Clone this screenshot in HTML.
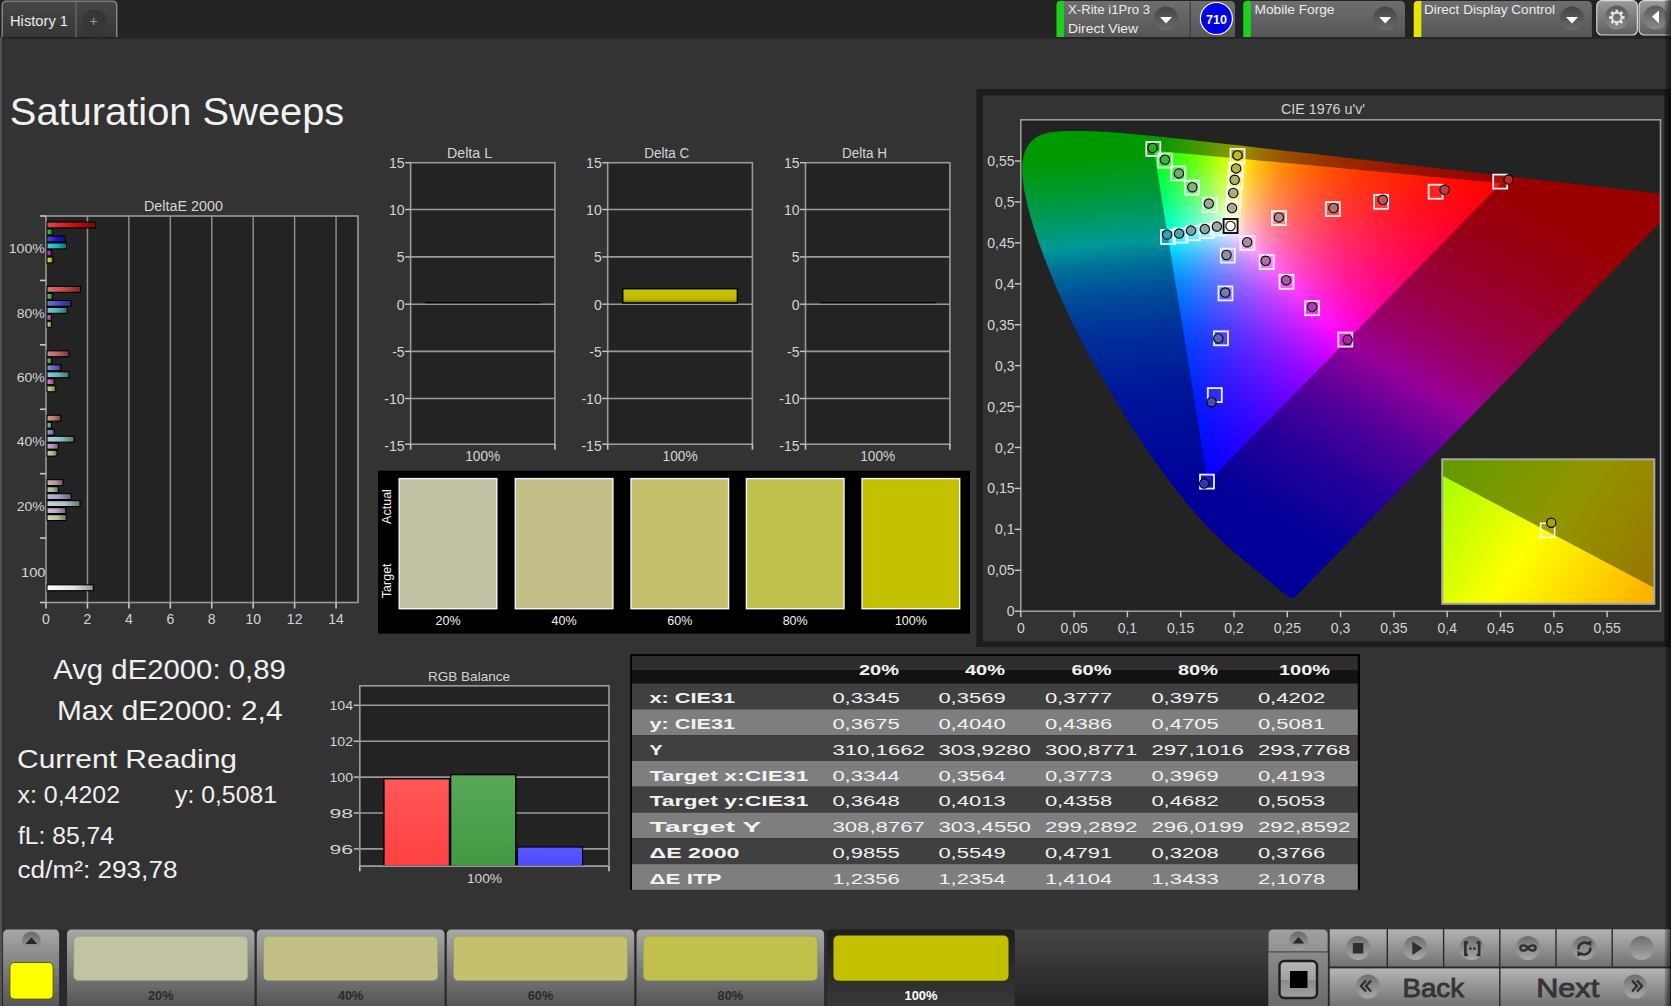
<!DOCTYPE html>
<html><head><meta charset="utf-8"><title>Saturation Sweeps</title>
<style>html,body{margin:0;padding:0;background:#333;overflow:hidden}svg{display:block}text{font-family:"Liberation Sans", sans-serif}</style>
</head><body><svg width="1671" height="1006" viewBox="0 0 1671 1006" font-family='"Liberation Sans", sans-serif'><defs><linearGradient id="v1" x1="0" y1="0" x2="0" y2="1"><stop offset="0" stop-color="#474747"/><stop offset="1" stop-color="#363636"/></linearGradient><linearGradient id="v2" x1="0" y1="0" x2="0" y2="1"><stop offset="0" stop-color="#6e6e6e"/><stop offset="1" stop-color="#565656"/></linearGradient><linearGradient id="v3" x1="0" y1="0" x2="0" y2="1"><stop offset="0" stop-color="#444"/><stop offset="1" stop-color="#6a6a6a"/></linearGradient><linearGradient id="v4" x1="0" y1="0" x2="0" y2="1"><stop offset="0" stop-color="#6e6e6e"/><stop offset="1" stop-color="#565656"/></linearGradient><linearGradient id="v5" x1="0" y1="0" x2="0" y2="1"><stop offset="0" stop-color="#444"/><stop offset="1" stop-color="#6a6a6a"/></linearGradient><linearGradient id="v6" x1="0" y1="0" x2="0" y2="1"><stop offset="0" stop-color="#6e6e6e"/><stop offset="1" stop-color="#565656"/></linearGradient><linearGradient id="v7" x1="0" y1="0" x2="0" y2="1"><stop offset="0" stop-color="#444"/><stop offset="1" stop-color="#6a6a6a"/></linearGradient><linearGradient id="v8" x1="0" y1="0" x2="0" y2="1"><stop offset="0" stop-color="#9a9a9a"/><stop offset="1" stop-color="#5e5e5e"/></linearGradient><linearGradient id="v9" x1="0" y1="0" x2="0" y2="1"><stop offset="0" stop-color="#9a9a9a"/><stop offset="1" stop-color="#5e5e5e"/></linearGradient><linearGradient id="v10" x1="0" y1="0" x2="0" y2="1"><stop offset="0" stop-color="#5a5a5a"/><stop offset="1" stop-color="#8a8a8a"/></linearGradient><linearGradient id="v11" x1="0" y1="0" x2="0" y2="1"><stop offset="0" stop-color="#5a5a5a"/><stop offset="1" stop-color="#8a8a8a"/></linearGradient><linearGradient id="h12" x1="0" y1="0" x2="1" y2="0"><stop offset="0" stop-color="#db4b4b"/><stop offset="0.5" stop-color="#d01010"/><stop offset="1" stop-color="#7c0909"/></linearGradient><linearGradient id="h13" x1="0" y1="0" x2="1" y2="0"><stop offset="0" stop-color="#57c357"/><stop offset="0.5" stop-color="#20b020"/><stop offset="1" stop-color="#136913"/></linearGradient><linearGradient id="h14" x1="0" y1="0" x2="1" y2="0"><stop offset="0" stop-color="#5151d5"/><stop offset="0.5" stop-color="#1818c8"/><stop offset="1" stop-color="#0e0e78"/></linearGradient><linearGradient id="h15" x1="0" y1="0" x2="1" y2="0"><stop offset="0" stop-color="#51c9c9"/><stop offset="0.5" stop-color="#18b8b8"/><stop offset="1" stop-color="#0e6e6e"/></linearGradient><linearGradient id="h16" x1="0" y1="0" x2="1" y2="0"><stop offset="0" stop-color="#c957c9"/><stop offset="0.5" stop-color="#b820b8"/><stop offset="1" stop-color="#6e136e"/></linearGradient><linearGradient id="h17" x1="0" y1="0" x2="1" y2="0"><stop offset="0" stop-color="#d5d551"/><stop offset="0.5" stop-color="#c8c818"/><stop offset="1" stop-color="#78780e"/></linearGradient><linearGradient id="h18" x1="0" y1="0" x2="1" y2="0"><stop offset="0" stop-color="#d57575"/><stop offset="0.5" stop-color="#c84848"/><stop offset="1" stop-color="#782b2b"/></linearGradient><linearGradient id="h19" x1="0" y1="0" x2="1" y2="0"><stop offset="0" stop-color="#6fbd6f"/><stop offset="0.5" stop-color="#40a840"/><stop offset="1" stop-color="#266426"/></linearGradient><linearGradient id="h20" x1="0" y1="0" x2="1" y2="0"><stop offset="0" stop-color="#7575d5"/><stop offset="0.5" stop-color="#4848c8"/><stop offset="1" stop-color="#2b2b78"/></linearGradient><linearGradient id="h21" x1="0" y1="0" x2="1" y2="0"><stop offset="0" stop-color="#75c9c9"/><stop offset="0.5" stop-color="#48b8b8"/><stop offset="1" stop-color="#2b6e6e"/></linearGradient><linearGradient id="h22" x1="0" y1="0" x2="1" y2="0"><stop offset="0" stop-color="#c975c9"/><stop offset="0.5" stop-color="#b848b8"/><stop offset="1" stop-color="#6e2b6e"/></linearGradient><linearGradient id="h23" x1="0" y1="0" x2="1" y2="0"><stop offset="0" stop-color="#c9c975"/><stop offset="0.5" stop-color="#b8b848"/><stop offset="1" stop-color="#6e6e2b"/></linearGradient><linearGradient id="h24" x1="0" y1="0" x2="1" y2="0"><stop offset="0" stop-color="#cf8787"/><stop offset="0.5" stop-color="#c06060"/><stop offset="1" stop-color="#733939"/></linearGradient><linearGradient id="h25" x1="0" y1="0" x2="1" y2="0"><stop offset="0" stop-color="#81bd81"/><stop offset="0.5" stop-color="#58a858"/><stop offset="1" stop-color="#346434"/></linearGradient><linearGradient id="h26" x1="0" y1="0" x2="1" y2="0"><stop offset="0" stop-color="#8d8dd5"/><stop offset="0.5" stop-color="#6868c8"/><stop offset="1" stop-color="#3e3e78"/></linearGradient><linearGradient id="h27" x1="0" y1="0" x2="1" y2="0"><stop offset="0" stop-color="#8dc9c9"/><stop offset="0.5" stop-color="#68b8b8"/><stop offset="1" stop-color="#3e6e6e"/></linearGradient><linearGradient id="h28" x1="0" y1="0" x2="1" y2="0"><stop offset="0" stop-color="#c98dc9"/><stop offset="0.5" stop-color="#b868b8"/><stop offset="1" stop-color="#6e3e6e"/></linearGradient><linearGradient id="h29" x1="0" y1="0" x2="1" y2="0"><stop offset="0" stop-color="#c9c98d"/><stop offset="0.5" stop-color="#b8b868"/><stop offset="1" stop-color="#6e6e3e"/></linearGradient><linearGradient id="h30" x1="0" y1="0" x2="1" y2="0"><stop offset="0" stop-color="#c99999"/><stop offset="0.5" stop-color="#b87878"/><stop offset="1" stop-color="#6e4848"/></linearGradient><linearGradient id="h31" x1="0" y1="0" x2="1" y2="0"><stop offset="0" stop-color="#99bd99"/><stop offset="0.5" stop-color="#78a878"/><stop offset="1" stop-color="#486448"/></linearGradient><linearGradient id="h32" x1="0" y1="0" x2="1" y2="0"><stop offset="0" stop-color="#9f9fcf"/><stop offset="0.5" stop-color="#8080c0"/><stop offset="1" stop-color="#4c4c73"/></linearGradient><linearGradient id="h33" x1="0" y1="0" x2="1" y2="0"><stop offset="0" stop-color="#abcfcf"/><stop offset="0.5" stop-color="#90c0c0"/><stop offset="1" stop-color="#567373"/></linearGradient><linearGradient id="h34" x1="0" y1="0" x2="1" y2="0"><stop offset="0" stop-color="#c9abc9"/><stop offset="0.5" stop-color="#b890b8"/><stop offset="1" stop-color="#6e566e"/></linearGradient><linearGradient id="h35" x1="0" y1="0" x2="1" y2="0"><stop offset="0" stop-color="#c9c9ab"/><stop offset="0.5" stop-color="#b8b890"/><stop offset="1" stop-color="#6e6e56"/></linearGradient><linearGradient id="h36" x1="0" y1="0" x2="1" y2="0"><stop offset="0" stop-color="#cfb1b1"/><stop offset="0.5" stop-color="#c09898"/><stop offset="1" stop-color="#735b5b"/></linearGradient><linearGradient id="h37" x1="0" y1="0" x2="1" y2="0"><stop offset="0" stop-color="#b1c9b1"/><stop offset="0.5" stop-color="#98b898"/><stop offset="1" stop-color="#5b6e5b"/></linearGradient><linearGradient id="h38" x1="0" y1="0" x2="1" y2="0"><stop offset="0" stop-color="#b7b7d5"/><stop offset="0.5" stop-color="#a0a0c8"/><stop offset="1" stop-color="#606078"/></linearGradient><linearGradient id="h39" x1="0" y1="0" x2="1" y2="0"><stop offset="0" stop-color="#c3d5d5"/><stop offset="0.5" stop-color="#b0c8c8"/><stop offset="1" stop-color="#697878"/></linearGradient><linearGradient id="h40" x1="0" y1="0" x2="1" y2="0"><stop offset="0" stop-color="#cfbdcf"/><stop offset="0.5" stop-color="#c0a8c0"/><stop offset="1" stop-color="#736473"/></linearGradient><linearGradient id="h41" x1="0" y1="0" x2="1" y2="0"><stop offset="0" stop-color="#cfcfb7"/><stop offset="0.5" stop-color="#c0c0a0"/><stop offset="1" stop-color="#737360"/></linearGradient><linearGradient id="h42" x1="0" y1="0" x2="1" y2="0"><stop offset="0" stop-color="#ffffff"/><stop offset="0.6" stop-color="#e0e0e0"/><stop offset="1" stop-color="#909090"/></linearGradient><linearGradient id="v43" x1="0" y1="0" x2="0" y2="1"><stop offset="0" stop-color="#cccc10"/><stop offset="0.25" stop-color="#c4c200"/><stop offset="0.7" stop-color="#bfbc00"/><stop offset="1" stop-color="#858300"/></linearGradient><linearGradient id="v44" x1="0" y1="0" x2="0" y2="1"><stop offset="0" stop-color="#ff5858"/><stop offset="1" stop-color="#ff4040"/></linearGradient><linearGradient id="v45" x1="0" y1="0" x2="0" y2="1"><stop offset="0" stop-color="#58a858"/><stop offset="1" stop-color="#409a40"/></linearGradient><linearGradient id="v46" x1="0" y1="0" x2="0" y2="1"><stop offset="0" stop-color="#5a5aff"/><stop offset="1" stop-color="#4a4aff"/></linearGradient><clipPath id="cLocus"><path d="M0.25680,0.01659 L0.25677,0.01658 L0.25674,0.01655 L0.25670,0.01652 L0.25665,0.01649 L0.25661,0.01646 L0.25656,0.01642 L0.25650,0.01639 L0.25644,0.01635 L0.25639,0.01631 L0.25632,0.01627 L0.25626,0.01622 L0.25620,0.01618 L0.25613,0.01614 L0.25607,0.01611 L0.25601,0.01607 L0.25594,0.01604 L0.25588,0.01600 L0.25582,0.01598 L0.25576,0.01595 L0.25570,0.01594 L0.25559,0.01590 L0.25549,0.01588 L0.25539,0.01585 L0.25529,0.01584 L0.25519,0.01583 L0.25509,0.01583 L0.25497,0.01584 L0.25484,0.01586 L0.25470,0.01589 L0.25453,0.01593 L0.25435,0.01598 L0.25415,0.01604 L0.25393,0.01610 L0.25370,0.01618 L0.25346,0.01626 L0.25321,0.01636 L0.25296,0.01647 L0.25271,0.01660 L0.25246,0.01673 L0.25221,0.01688 L0.25172,0.01723 L0.25123,0.01763 L0.25073,0.01808 L0.25020,0.01858 L0.24962,0.01913 L0.24900,0.01972 L0.24836,0.02035 L0.24768,0.02103 L0.24694,0.02179 L0.24612,0.02262 L0.24523,0.02354 L0.24427,0.02454 L0.24326,0.02560 L0.24219,0.02674 L0.24106,0.02795 L0.23990,0.02923 L0.23869,0.03057 L0.23743,0.03198 L0.23610,0.03347 L0.23469,0.03501 L0.23322,0.03660 L0.23171,0.03824 L0.23012,0.03994 L0.22844,0.04175 L0.22663,0.04368 L0.22471,0.04573 L0.22268,0.04788 L0.22057,0.05013 L0.21836,0.05248 L0.21606,0.05495 L0.21370,0.05748 L0.21127,0.06007 L0.20875,0.06278 L0.20612,0.06567 L0.20334,0.06878 L0.20045,0.07206 L0.19746,0.07546 L0.19435,0.07906 L0.19111,0.08293 L0.18772,0.08711 L0.18427,0.09143 L0.18078,0.09582 L0.17713,0.10054 L0.17323,0.10585 L0.16896,0.11195 L0.16441,0.11867 L0.15968,0.12580 L0.15472,0.13348 L0.14953,0.14184 L0.14408,0.15098 L0.13847,0.16063 L0.13278,0.17061 L0.12694,0.18112 L0.12092,0.19234 L0.11469,0.20437 L0.10836,0.21695 L0.10202,0.22982 L0.09564,0.24305 L0.08924,0.25671 L0.08282,0.27083 L0.07638,0.28516 L0.07001,0.29949 L0.06379,0.31385 L0.05781,0.32825 L0.05213,0.34269 L0.04674,0.35709 L0.04161,0.37129 L0.03679,0.38518 L0.03229,0.39866 L0.02816,0.41168 L0.02430,0.42436 L0.02068,0.43668 L0.01737,0.44845 L0.01443,0.45953 L0.01189,0.46984 L0.00967,0.47957 L0.00769,0.48884 L0.00598,0.49756 L0.00457,0.50565 L0.00347,0.51307 L0.00263,0.51995 L0.00199,0.52641 L0.00158,0.53245 L0.00139,0.53803 L0.00144,0.54316 L0.00171,0.54793 L0.00217,0.55241 L0.00281,0.55657 L0.00364,0.56039 L0.00464,0.56384 L0.00585,0.56699 L0.00725,0.56989 L0.00882,0.57253 L0.01050,0.57490 L0.01228,0.57697 L0.01420,0.57875 L0.01628,0.58027 L0.01849,0.58157 L0.02078,0.58270 L0.02312,0.58367 L0.02552,0.58445 L0.02805,0.58504 L0.03066,0.58548 L0.03333,0.58583 L0.03601,0.58614 L0.03873,0.58640 L0.04152,0.58656 L0.04436,0.58666 L0.04721,0.58671 L0.05006,0.58675 L0.05289,0.58677 L0.05572,0.58676 L0.05857,0.58670 L0.06144,0.58662 L0.06434,0.58652 L0.06725,0.58640 L0.07019,0.58624 L0.07316,0.58605 L0.07617,0.58585 L0.07922,0.58562 L0.08233,0.58536 L0.08549,0.58508 L0.08870,0.58478 L0.09196,0.58446 L0.09527,0.58411 L0.09863,0.58375 L0.10206,0.58336 L0.10554,0.58295 L0.10909,0.58252 L0.11270,0.58207 L0.11638,0.58160 L0.12014,0.58112 L0.12397,0.58061 L0.12787,0.58009 L0.13186,0.57955 L0.13593,0.57900 L0.14009,0.57842 L0.14435,0.57783 L0.14868,0.57722 L0.15310,0.57659 L0.15761,0.57595 L0.16221,0.57528 L0.16691,0.57460 L0.17170,0.57390 L0.17659,0.57318 L0.18158,0.57245 L0.18668,0.57171 L0.19189,0.57094 L0.19719,0.57016 L0.20260,0.56936 L0.20810,0.56855 L0.21371,0.56771 L0.21943,0.56686 L0.22525,0.56599 L0.23117,0.56511 L0.23719,0.56421 L0.24333,0.56329 L0.24957,0.56235 L0.25591,0.56140 L0.26234,0.56044 L0.26887,0.55946 L0.27551,0.55847 L0.28225,0.55746 L0.28907,0.55644 L0.29596,0.55541 L0.30293,0.55437 L0.30999,0.55332 L0.31713,0.55226 L0.32431,0.55119 L0.33153,0.55012 L0.33879,0.54903 L0.34611,0.54793 L0.35346,0.54682 L0.36079,0.54572 L0.36806,0.54463 L0.37525,0.54355 L0.38237,0.54249 L0.38943,0.54143 L0.39646,0.54038 L0.40347,0.53933 L0.41049,0.53829 L0.41748,0.53724 L0.42441,0.53620 L0.43125,0.53518 L0.43794,0.53419 L0.44448,0.53322 L0.45086,0.53227 L0.45709,0.53135 L0.46319,0.53045 L0.46917,0.52956 L0.47501,0.52869 L0.48068,0.52784 L0.48619,0.52701 L0.49155,0.52620 L0.49677,0.52542 L0.50181,0.52466 L0.50666,0.52393 L0.51133,0.52323 L0.51586,0.52255 L0.52026,0.52189 L0.52450,0.52126 L0.52856,0.52066 L0.53246,0.52008 L0.53624,0.51952 L0.53992,0.51898 L0.54330,0.51847 L0.54635,0.51802 L0.54936,0.51756 L0.55264,0.51707 L0.55650,0.51649 L0.55877,0.51615 L0.56127,0.51577 L0.56394,0.51537 L0.56674,0.51495 L0.56962,0.51452 L0.57251,0.51409 L0.57535,0.51366 L0.57810,0.51325 L0.58068,0.51286 L0.58304,0.51251 L0.58520,0.51219 L0.58725,0.51188 L0.58920,0.51159 L0.59104,0.51132 L0.59280,0.51106 L0.59447,0.51082 L0.59607,0.51058 L0.59760,0.51035 L0.59907,0.51014 L0.60050,0.50993 L0.60184,0.50973 L0.60306,0.50954 L0.60419,0.50937 L0.60524,0.50922 L0.60623,0.50907 L0.60718,0.50893 L0.60810,0.50879 L0.60901,0.50865 L0.60993,0.50851 L0.61088,0.50837 L0.61137,0.50829 L0.61186,0.50822 L0.61236,0.50815 L0.61286,0.50807 L0.61336,0.50800 L0.61386,0.50792 L0.61435,0.50785 L0.61485,0.50777 L0.61533,0.50770 L0.61581,0.50763 L0.61628,0.50756 L0.61675,0.50749 L0.61720,0.50742 L0.61763,0.50735 L0.61806,0.50729 L0.61846,0.50723 L0.61885,0.50717 L0.61922,0.50712 L0.61957,0.50706 L0.61990,0.50702 L0.62020,0.50697 L0.62049,0.50693 L0.62076,0.50689 L0.62101,0.50685 L0.62125,0.50681 L0.62147,0.50678 L0.62167,0.50675 L0.62187,0.50672 L0.62205,0.50669 L0.62221,0.50667 L0.62237,0.50664 L0.62251,0.50662 L0.62265,0.50660 L0.62278,0.50658 L0.62290,0.50657 L0.62301,0.50655 L0.62311,0.50653 L0.62321,0.50652 L0.62330,0.50650 L0.62339,0.50649 Z"/></clipPath><clipPath id="cPlot"><rect x="1020.8" y="119.8" width="639.7" height="491.40000000000003"/></clipPath><clipPath id="cTri"><path d="M0.45070,0.52289 L0.12500,0.56250 L0.17544,0.15789 Z"/></clipPath><linearGradient id="e47" gradientUnits="userSpaceOnUse" x1="0.45070" y1="0.52289" x2="0.12500" y2="0.56250"><stop offset="0.0000" stop-color="#990000"/><stop offset="0.3065" stop-color="#991600"/><stop offset="0.4874" stop-color="#992f00"/><stop offset="0.6080" stop-color="#994c00"/><stop offset="0.6884" stop-color="#996c00"/><stop offset="0.7437" stop-color="#998e00"/><stop offset="0.7588" stop-color="#989900"/><stop offset="0.8492" stop-color="#559900"/><stop offset="0.9598" stop-color="#149900"/><stop offset="1.0000" stop-color="#009900"/></linearGradient><linearGradient id="e48" gradientUnits="userSpaceOnUse" x1="0.12500" y1="0.56250" x2="0.17544" y2="0.15789"><stop offset="0.0000" stop-color="#009900"/><stop offset="0.1206" stop-color="#00993a"/><stop offset="0.2211" stop-color="#009979"/><stop offset="0.2663" stop-color="#009899"/><stop offset="0.3266" stop-color="#007199"/><stop offset="0.4070" stop-color="#005099"/><stop offset="0.5226" stop-color="#003299"/><stop offset="0.6985" stop-color="#001899"/><stop offset="0.9849" stop-color="#000199"/><stop offset="1.0000" stop-color="#000099"/></linearGradient><linearGradient id="e49" gradientUnits="userSpaceOnUse" x1="0.17544" y1="0.15789" x2="0.45070" y2="0.52289"><stop offset="0.0000" stop-color="#000099"/><stop offset="0.1809" stop-color="#260099"/><stop offset="0.3166" stop-color="#500099"/><stop offset="0.4221" stop-color="#7e0099"/><stop offset="0.4724" stop-color="#990098"/><stop offset="0.5578" stop-color="#99006c"/><stop offset="0.6734" stop-color="#990042"/><stop offset="0.8291" stop-color="#99001c"/><stop offset="1.0000" stop-color="#990000"/></linearGradient><linearGradient id="s50" gradientUnits="userSpaceOnUse" x1="0.17373" y1="0" x2="0.17869" y2="0"><stop offset="0.0000" stop-color="#0000ff"/><stop offset="1.0000" stop-color="#0100ff"/></linearGradient><linearGradient id="s51" gradientUnits="userSpaceOnUse" x1="0.17342" y1="0" x2="0.18053" y2="0"><stop offset="0.0000" stop-color="#0001ff"/><stop offset="1.0000" stop-color="#0300ff"/></linearGradient><linearGradient id="s52" gradientUnits="userSpaceOnUse" x1="0.17312" y1="0" x2="0.18237" y2="0"><stop offset="0.0000" stop-color="#0001ff"/><stop offset="1.0000" stop-color="#0500ff"/></linearGradient><linearGradient id="s53" gradientUnits="userSpaceOnUse" x1="0.17281" y1="0" x2="0.18422" y2="0"><stop offset="0.0000" stop-color="#0002ff"/><stop offset="1.0000" stop-color="#0700ff"/></linearGradient><linearGradient id="s54" gradientUnits="userSpaceOnUse" x1="0.17251" y1="0" x2="0.18606" y2="0"><stop offset="0.0000" stop-color="#0002ff"/><stop offset="1.0000" stop-color="#0900ff"/></linearGradient><linearGradient id="s55" gradientUnits="userSpaceOnUse" x1="0.17220" y1="0" x2="0.18790" y2="0"><stop offset="0.0000" stop-color="#0003ff"/><stop offset="1.0000" stop-color="#0b00ff"/></linearGradient><linearGradient id="s56" gradientUnits="userSpaceOnUse" x1="0.17190" y1="0" x2="0.18975" y2="0"><stop offset="0.0000" stop-color="#0004ff"/><stop offset="1.0000" stop-color="#0d00ff"/></linearGradient><linearGradient id="s57" gradientUnits="userSpaceOnUse" x1="0.17159" y1="0" x2="0.19159" y2="0"><stop offset="0.0000" stop-color="#0004ff"/><stop offset="1.0000" stop-color="#0f00ff"/></linearGradient><linearGradient id="s58" gradientUnits="userSpaceOnUse" x1="0.17129" y1="0" x2="0.19343" y2="0"><stop offset="0.0000" stop-color="#0005ff"/><stop offset="1.0000" stop-color="#1100ff"/></linearGradient><linearGradient id="s59" gradientUnits="userSpaceOnUse" x1="0.17099" y1="0" x2="0.19527" y2="0"><stop offset="0.0000" stop-color="#0006ff"/><stop offset="1.0000" stop-color="#1300ff"/></linearGradient><linearGradient id="s60" gradientUnits="userSpaceOnUse" x1="0.17068" y1="0" x2="0.19712" y2="0"><stop offset="0.0000" stop-color="#0006ff"/><stop offset="1.0000" stop-color="#1500ff"/></linearGradient><linearGradient id="s61" gradientUnits="userSpaceOnUse" x1="0.17038" y1="0" x2="0.19896" y2="0"><stop offset="0.0000" stop-color="#0007ff"/><stop offset="1.0000" stop-color="#1800ff"/></linearGradient><linearGradient id="s62" gradientUnits="userSpaceOnUse" x1="0.17007" y1="0" x2="0.20080" y2="0"><stop offset="0.0000" stop-color="#0007ff"/><stop offset="1.0000" stop-color="#1a00ff"/></linearGradient><linearGradient id="s63" gradientUnits="userSpaceOnUse" x1="0.16977" y1="0" x2="0.20264" y2="0"><stop offset="0.0000" stop-color="#0008ff"/><stop offset="1.0000" stop-color="#1c00ff"/></linearGradient><linearGradient id="s64" gradientUnits="userSpaceOnUse" x1="0.16946" y1="0" x2="0.20449" y2="0"><stop offset="0.0000" stop-color="#0009ff"/><stop offset="1.0000" stop-color="#1f00ff"/></linearGradient><linearGradient id="s65" gradientUnits="userSpaceOnUse" x1="0.16916" y1="0" x2="0.20633" y2="0"><stop offset="0.0000" stop-color="#0009ff"/><stop offset="1.0000" stop-color="#2100ff"/></linearGradient><linearGradient id="s66" gradientUnits="userSpaceOnUse" x1="0.16885" y1="0" x2="0.20817" y2="0"><stop offset="0.0000" stop-color="#000aff"/><stop offset="1.0000" stop-color="#2300ff"/></linearGradient><linearGradient id="s67" gradientUnits="userSpaceOnUse" x1="0.16855" y1="0" x2="0.21002" y2="0"><stop offset="0.0000" stop-color="#000bff"/><stop offset="1.0000" stop-color="#2600ff"/></linearGradient><linearGradient id="s68" gradientUnits="userSpaceOnUse" x1="0.16824" y1="0" x2="0.21186" y2="0"><stop offset="0.0000" stop-color="#000bff"/><stop offset="1.0000" stop-color="#2800ff"/></linearGradient><linearGradient id="s69" gradientUnits="userSpaceOnUse" x1="0.16794" y1="0" x2="0.21370" y2="0"><stop offset="0.0000" stop-color="#000cff"/><stop offset="1.0000" stop-color="#2b00ff"/></linearGradient><linearGradient id="s70" gradientUnits="userSpaceOnUse" x1="0.16763" y1="0" x2="0.21554" y2="0"><stop offset="0.0000" stop-color="#000dff"/><stop offset="1.0000" stop-color="#2d00ff"/></linearGradient><linearGradient id="s71" gradientUnits="userSpaceOnUse" x1="0.16733" y1="0" x2="0.21739" y2="0"><stop offset="0.0000" stop-color="#000eff"/><stop offset="1.0000" stop-color="#3000ff"/></linearGradient><linearGradient id="s72" gradientUnits="userSpaceOnUse" x1="0.16703" y1="0" x2="0.21923" y2="0"><stop offset="0.0000" stop-color="#000eff"/><stop offset="1.0000" stop-color="#3300ff"/></linearGradient><linearGradient id="s73" gradientUnits="userSpaceOnUse" x1="0.16672" y1="0" x2="0.22107" y2="0"><stop offset="0.0000" stop-color="#000fff"/><stop offset="1.0000" stop-color="#3500ff"/></linearGradient><linearGradient id="s74" gradientUnits="userSpaceOnUse" x1="0.16642" y1="0" x2="0.22292" y2="0"><stop offset="0.0000" stop-color="#0010ff"/><stop offset="1.0000" stop-color="#3800ff"/></linearGradient><linearGradient id="s75" gradientUnits="userSpaceOnUse" x1="0.16611" y1="0" x2="0.22476" y2="0"><stop offset="0.0000" stop-color="#0011ff"/><stop offset="1.0000" stop-color="#3b00ff"/></linearGradient><linearGradient id="s76" gradientUnits="userSpaceOnUse" x1="0.16581" y1="0" x2="0.22660" y2="0"><stop offset="0.0000" stop-color="#0011ff"/><stop offset="1.0000" stop-color="#3d00ff"/></linearGradient><linearGradient id="s77" gradientUnits="userSpaceOnUse" x1="0.16550" y1="0" x2="0.22844" y2="0"><stop offset="0.0000" stop-color="#0012ff"/><stop offset="1.0000" stop-color="#4000ff"/></linearGradient><linearGradient id="s78" gradientUnits="userSpaceOnUse" x1="0.16520" y1="0" x2="0.23029" y2="0"><stop offset="0.0000" stop-color="#0013ff"/><stop offset="1.0000" stop-color="#4300ff"/></linearGradient><linearGradient id="s79" gradientUnits="userSpaceOnUse" x1="0.16489" y1="0" x2="0.23213" y2="0"><stop offset="0.0000" stop-color="#0014ff"/><stop offset="1.0000" stop-color="#4600ff"/></linearGradient><linearGradient id="s80" gradientUnits="userSpaceOnUse" x1="0.16459" y1="0" x2="0.23397" y2="0"><stop offset="0.0000" stop-color="#0015ff"/><stop offset="1.0000" stop-color="#4900ff"/></linearGradient><linearGradient id="s81" gradientUnits="userSpaceOnUse" x1="0.16428" y1="0" x2="0.23582" y2="0"><stop offset="0.0000" stop-color="#0015ff"/><stop offset="1.0000" stop-color="#4c00ff"/></linearGradient><linearGradient id="s82" gradientUnits="userSpaceOnUse" x1="0.16398" y1="0" x2="0.23766" y2="0"><stop offset="0.0000" stop-color="#0016ff"/><stop offset="1.0000" stop-color="#4f00ff"/></linearGradient><linearGradient id="s83" gradientUnits="userSpaceOnUse" x1="0.16367" y1="0" x2="0.23950" y2="0"><stop offset="0.0000" stop-color="#0017ff"/><stop offset="1.0000" stop-color="#5300ff"/></linearGradient><linearGradient id="s84" gradientUnits="userSpaceOnUse" x1="0.16337" y1="0" x2="0.24134" y2="0"><stop offset="0.0000" stop-color="#0018ff"/><stop offset="1.0000" stop-color="#5600ff"/></linearGradient><linearGradient id="s85" gradientUnits="userSpaceOnUse" x1="0.16307" y1="0" x2="0.24319" y2="0"><stop offset="0.0000" stop-color="#0019ff"/><stop offset="1.0000" stop-color="#5900ff"/></linearGradient><linearGradient id="s86" gradientUnits="userSpaceOnUse" x1="0.16276" y1="0" x2="0.24503" y2="0"><stop offset="0.0000" stop-color="#001aff"/><stop offset="1.0000" stop-color="#5c00ff"/></linearGradient><linearGradient id="s87" gradientUnits="userSpaceOnUse" x1="0.16246" y1="0" x2="0.24687" y2="0"><stop offset="0.0000" stop-color="#001bff"/><stop offset="1.0000" stop-color="#6000ff"/></linearGradient><linearGradient id="s88" gradientUnits="userSpaceOnUse" x1="0.16215" y1="0" x2="0.24872" y2="0"><stop offset="0.0000" stop-color="#001cff"/><stop offset="1.0000" stop-color="#6300ff"/></linearGradient><linearGradient id="s89" gradientUnits="userSpaceOnUse" x1="0.16185" y1="0" x2="0.25056" y2="0"><stop offset="0.0000" stop-color="#001dff"/><stop offset="1.0000" stop-color="#6700ff"/></linearGradient><linearGradient id="s90" gradientUnits="userSpaceOnUse" x1="0.16154" y1="0" x2="0.25240" y2="0"><stop offset="0.0000" stop-color="#001eff"/><stop offset="0.9896" stop-color="#6a00ff"/><stop offset="1.0000" stop-color="#6a00ff"/></linearGradient><linearGradient id="s91" gradientUnits="userSpaceOnUse" x1="0.16124" y1="0" x2="0.25424" y2="0"><stop offset="0.0000" stop-color="#001fff"/><stop offset="0.9899" stop-color="#6e00ff"/><stop offset="1.0000" stop-color="#6e00ff"/></linearGradient><linearGradient id="s92" gradientUnits="userSpaceOnUse" x1="0.16093" y1="0" x2="0.25609" y2="0"><stop offset="0.0000" stop-color="#0020ff"/><stop offset="0.9901" stop-color="#7200ff"/><stop offset="1.0000" stop-color="#7200ff"/></linearGradient><linearGradient id="s93" gradientUnits="userSpaceOnUse" x1="0.16063" y1="0" x2="0.25793" y2="0"><stop offset="0.0000" stop-color="#0021ff"/><stop offset="0.9903" stop-color="#7500ff"/><stop offset="1.0000" stop-color="#7500ff"/></linearGradient><linearGradient id="s94" gradientUnits="userSpaceOnUse" x1="0.16032" y1="0" x2="0.25977" y2="0"><stop offset="0.0000" stop-color="#0022ff"/><stop offset="0.9906" stop-color="#7900ff"/><stop offset="1.0000" stop-color="#7900ff"/></linearGradient><linearGradient id="s95" gradientUnits="userSpaceOnUse" x1="0.16002" y1="0" x2="0.26161" y2="0"><stop offset="0.0000" stop-color="#0023ff"/><stop offset="0.9907" stop-color="#7d00ff"/><stop offset="1.0000" stop-color="#7d00ff"/></linearGradient><linearGradient id="s96" gradientUnits="userSpaceOnUse" x1="0.15971" y1="0" x2="0.26346" y2="0"><stop offset="0.0000" stop-color="#0024ff"/><stop offset="0.9909" stop-color="#8100ff"/><stop offset="1.0000" stop-color="#8100ff"/></linearGradient><linearGradient id="s97" gradientUnits="userSpaceOnUse" x1="0.15941" y1="0" x2="0.26530" y2="0"><stop offset="0.0000" stop-color="#0025ff"/><stop offset="0.9911" stop-color="#8500ff"/><stop offset="1.0000" stop-color="#8500ff"/></linearGradient><linearGradient id="s98" gradientUnits="userSpaceOnUse" x1="0.15911" y1="0" x2="0.26714" y2="0"><stop offset="0.0000" stop-color="#0026ff"/><stop offset="0.9913" stop-color="#8900ff"/><stop offset="1.0000" stop-color="#8900ff"/></linearGradient><linearGradient id="s99" gradientUnits="userSpaceOnUse" x1="0.15880" y1="0" x2="0.26899" y2="0"><stop offset="0.0000" stop-color="#0027ff"/><stop offset="0.9487" stop-color="#8901ff"/><stop offset="1.0000" stop-color="#8e00ff"/></linearGradient><linearGradient id="s100" gradientUnits="userSpaceOnUse" x1="0.15850" y1="0" x2="0.27083" y2="0"><stop offset="0.0000" stop-color="#0028ff"/><stop offset="0.9160" stop-color="#8803ff"/><stop offset="1.0000" stop-color="#9200ff"/></linearGradient><linearGradient id="s101" gradientUnits="userSpaceOnUse" x1="0.15819" y1="0" x2="0.27267" y2="0"><stop offset="0.0000" stop-color="#0029ff"/><stop offset="0.8852" stop-color="#8704ff"/><stop offset="1.0000" stop-color="#9600ff"/></linearGradient><linearGradient id="s102" gradientUnits="userSpaceOnUse" x1="0.15789" y1="0" x2="0.27451" y2="0"><stop offset="0.0000" stop-color="#002aff"/><stop offset="0.8548" stop-color="#8606ff"/><stop offset="0.9919" stop-color="#9b00ff"/><stop offset="1.0000" stop-color="#9b00ff"/></linearGradient><linearGradient id="s103" gradientUnits="userSpaceOnUse" x1="0.15758" y1="0" x2="0.27636" y2="0"><stop offset="0.0000" stop-color="#002cff"/><stop offset="0.8333" stop-color="#8707ff"/><stop offset="0.9921" stop-color="#a000ff"/><stop offset="1.0000" stop-color="#a000ff"/></linearGradient><linearGradient id="s104" gradientUnits="userSpaceOnUse" x1="0.15728" y1="0" x2="0.27820" y2="0"><stop offset="0.0000" stop-color="#002dff"/><stop offset="0.8047" stop-color="#8509ff"/><stop offset="0.9922" stop-color="#a400ff"/><stop offset="1.0000" stop-color="#a400ff"/></linearGradient><linearGradient id="s105" gradientUnits="userSpaceOnUse" x1="0.15697" y1="0" x2="0.28004" y2="0"><stop offset="0.0000" stop-color="#002eff"/><stop offset="0.7786" stop-color="#840aff"/><stop offset="0.9924" stop-color="#a900ff"/><stop offset="1.0000" stop-color="#a900ff"/></linearGradient><linearGradient id="s106" gradientUnits="userSpaceOnUse" x1="0.15667" y1="0" x2="0.28189" y2="0"><stop offset="0.0000" stop-color="#002fff"/><stop offset="0.7519" stop-color="#830cff"/><stop offset="0.9925" stop-color="#ae00ff"/><stop offset="1.0000" stop-color="#ae00ff"/></linearGradient><linearGradient id="s107" gradientUnits="userSpaceOnUse" x1="0.15636" y1="0" x2="0.28373" y2="0"><stop offset="0.0000" stop-color="#0031ff"/><stop offset="0.7259" stop-color="#820dff"/><stop offset="0.9926" stop-color="#b300ff"/><stop offset="1.0000" stop-color="#b300ff"/></linearGradient><linearGradient id="s108" gradientUnits="userSpaceOnUse" x1="0.15606" y1="0" x2="0.28557" y2="0"><stop offset="0.0000" stop-color="#0032ff"/><stop offset="0.7029" stop-color="#810fff"/><stop offset="0.9928" stop-color="#b800ff"/><stop offset="1.0000" stop-color="#b800ff"/></linearGradient><linearGradient id="s109" gradientUnits="userSpaceOnUse" x1="0.15575" y1="0" x2="0.28741" y2="0"><stop offset="0.0000" stop-color="#0033ff"/><stop offset="0.6857" stop-color="#8110ff"/><stop offset="0.9929" stop-color="#bd00ff"/><stop offset="1.0000" stop-color="#bd00ff"/></linearGradient><linearGradient id="s110" gradientUnits="userSpaceOnUse" x1="0.15545" y1="0" x2="0.28926" y2="0"><stop offset="0.0000" stop-color="#0035ff"/><stop offset="0.6620" stop-color="#8012ff"/><stop offset="0.9930" stop-color="#c300ff"/><stop offset="1.0000" stop-color="#c300ff"/></linearGradient><linearGradient id="s111" gradientUnits="userSpaceOnUse" x1="0.15515" y1="0" x2="0.29110" y2="0"><stop offset="0.0000" stop-color="#0036ff"/><stop offset="0.6389" stop-color="#7e14ff"/><stop offset="0.9931" stop-color="#c800ff"/><stop offset="1.0000" stop-color="#c800ff"/></linearGradient><linearGradient id="s112" gradientUnits="userSpaceOnUse" x1="0.15484" y1="0" x2="0.29294" y2="0"><stop offset="0.0000" stop-color="#0037ff"/><stop offset="0.6190" stop-color="#7e16ff"/><stop offset="0.9932" stop-color="#ce00ff"/><stop offset="1.0000" stop-color="#ce00ff"/></linearGradient><linearGradient id="s113" gradientUnits="userSpaceOnUse" x1="0.15454" y1="0" x2="0.29479" y2="0"><stop offset="0.0000" stop-color="#0039ff"/><stop offset="0.5973" stop-color="#7c18ff"/><stop offset="0.9933" stop-color="#d300ff"/><stop offset="1.0000" stop-color="#d300ff"/></linearGradient><linearGradient id="s114" gradientUnits="userSpaceOnUse" x1="0.15423" y1="0" x2="0.29663" y2="0"><stop offset="0.0000" stop-color="#003aff"/><stop offset="0.5762" stop-color="#7b1aff"/><stop offset="0.9934" stop-color="#d900ff"/><stop offset="1.0000" stop-color="#d900ff"/></linearGradient><linearGradient id="s115" gradientUnits="userSpaceOnUse" x1="0.15393" y1="0" x2="0.29847" y2="0"><stop offset="0.0000" stop-color="#003cff"/><stop offset="0.5584" stop-color="#7a1bff"/><stop offset="0.9935" stop-color="#df00ff"/><stop offset="1.0000" stop-color="#df00ff"/></linearGradient><linearGradient id="s116" gradientUnits="userSpaceOnUse" x1="0.15362" y1="0" x2="0.30031" y2="0"><stop offset="0.0000" stop-color="#003dff"/><stop offset="0.5385" stop-color="#781dff"/><stop offset="0.9936" stop-color="#e600ff"/><stop offset="1.0000" stop-color="#e600ff"/></linearGradient><linearGradient id="s117" gradientUnits="userSpaceOnUse" x1="0.15332" y1="0" x2="0.30216" y2="0"><stop offset="0.0000" stop-color="#003fff"/><stop offset="0.5190" stop-color="#771fff"/><stop offset="0.9937" stop-color="#ec00ff"/><stop offset="1.0000" stop-color="#ec00ff"/></linearGradient><linearGradient id="s118" gradientUnits="userSpaceOnUse" x1="0.15301" y1="0" x2="0.30400" y2="0"><stop offset="0.0000" stop-color="#0041ff"/><stop offset="0.4937" stop-color="#7422ff"/><stop offset="0.9938" stop-color="#f200ff"/><stop offset="1.0000" stop-color="#f200ff"/></linearGradient><linearGradient id="s119" gradientUnits="userSpaceOnUse" x1="0.15271" y1="0" x2="0.30584" y2="0"><stop offset="0.0000" stop-color="#0042ff"/><stop offset="0.4785" stop-color="#7324ff"/><stop offset="0.9939" stop-color="#f900ff"/><stop offset="1.0000" stop-color="#f900ff"/></linearGradient><linearGradient id="s120" gradientUnits="userSpaceOnUse" x1="0.15240" y1="0" x2="0.30768" y2="0"><stop offset="0.0000" stop-color="#0044ff"/><stop offset="0.4606" stop-color="#7126ff"/><stop offset="0.9879" stop-color="#ff00fe"/><stop offset="1.0000" stop-color="#ff00fe"/></linearGradient><linearGradient id="s121" gradientUnits="userSpaceOnUse" x1="0.15210" y1="0" x2="0.30953" y2="0"><stop offset="0.0000" stop-color="#0046ff"/><stop offset="0.4371" stop-color="#6e29ff"/><stop offset="0.9641" stop-color="#ff02fd"/><stop offset="1.0000" stop-color="#ff00f8"/></linearGradient><linearGradient id="s122" gradientUnits="userSpaceOnUse" x1="0.15180" y1="0" x2="0.31137" y2="0"><stop offset="0.0000" stop-color="#0047ff"/><stop offset="0.4176" stop-color="#6b2bff"/><stop offset="0.9412" stop-color="#ff04fd"/><stop offset="0.9941" stop-color="#ff00f1"/><stop offset="1.0000" stop-color="#ff00f1"/></linearGradient><linearGradient id="s123" gradientUnits="userSpaceOnUse" x1="0.15149" y1="0" x2="0.31321" y2="0"><stop offset="0.0000" stop-color="#0049ff"/><stop offset="0.3953" stop-color="#682eff"/><stop offset="0.9186" stop-color="#ff05fd"/><stop offset="0.9942" stop-color="#ff00eb"/><stop offset="1.0000" stop-color="#ff00eb"/></linearGradient><linearGradient id="s124" gradientUnits="userSpaceOnUse" x1="0.15119" y1="0" x2="0.31506" y2="0"><stop offset="0.0000" stop-color="#004bff"/><stop offset="0.3621" stop-color="#6132ff"/><stop offset="0.8966" stop-color="#ff07fd"/><stop offset="0.9943" stop-color="#ff00e4"/><stop offset="1.0000" stop-color="#ff00e4"/></linearGradient><linearGradient id="s125" gradientUnits="userSpaceOnUse" x1="0.15088" y1="0" x2="0.31690" y2="0"><stop offset="0.0000" stop-color="#004dff"/><stop offset="0.3068" stop-color="#5337ff"/><stop offset="0.8750" stop-color="#ff09fd"/><stop offset="0.9943" stop-color="#ff00de"/><stop offset="1.0000" stop-color="#ff00de"/></linearGradient><linearGradient id="s126" gradientUnits="userSpaceOnUse" x1="0.15058" y1="0" x2="0.31874" y2="0"><stop offset="0.0000" stop-color="#004fff"/><stop offset="0.2570" stop-color="#473cff"/><stop offset="0.8547" stop-color="#ff0bfd"/><stop offset="0.9944" stop-color="#ff00d9"/><stop offset="1.0000" stop-color="#ff00d9"/></linearGradient><linearGradient id="s127" gradientUnits="userSpaceOnUse" x1="0.15027" y1="0" x2="0.32058" y2="0"><stop offset="0.0000" stop-color="#0051ff"/><stop offset="0.2155" stop-color="#3c41ff"/><stop offset="0.8177" stop-color="#fb0fff"/><stop offset="0.8729" stop-color="#ff0af1"/><stop offset="0.9945" stop-color="#ff00d3"/><stop offset="1.0000" stop-color="#ff00d3"/></linearGradient><linearGradient id="s128" gradientUnits="userSpaceOnUse" x1="0.14997" y1="0" x2="0.32243" y2="0"><stop offset="0.0000" stop-color="#0053ff"/><stop offset="0.1858" stop-color="#3545ff"/><stop offset="0.7760" stop-color="#f313ff"/><stop offset="0.8197" stop-color="#ff0ffc"/><stop offset="0.9891" stop-color="#ff00cd"/><stop offset="1.0000" stop-color="#ff00cd"/></linearGradient><linearGradient id="s129" gradientUnits="userSpaceOnUse" x1="0.14966" y1="0" x2="0.32427" y2="0"><stop offset="0.0000" stop-color="#0055ff"/><stop offset="0.1559" stop-color="#2d49ff"/><stop offset="0.7366" stop-color="#ec17ff"/><stop offset="0.7957" stop-color="#ff12fd"/><stop offset="0.9839" stop-color="#ff00c8"/><stop offset="1.0000" stop-color="#ff00c8"/></linearGradient><linearGradient id="s130" gradientUnits="userSpaceOnUse" x1="0.14936" y1="0" x2="0.32611" y2="0"><stop offset="0.0000" stop-color="#0057ff"/><stop offset="0.1383" stop-color="#284cff"/><stop offset="0.7074" stop-color="#e81bff"/><stop offset="0.7766" stop-color="#ff14fd"/><stop offset="0.9628" stop-color="#ff02c8"/><stop offset="1.0000" stop-color="#ff00c2"/></linearGradient><linearGradient id="s131" gradientUnits="userSpaceOnUse" x1="0.14905" y1="0" x2="0.32796" y2="0"><stop offset="0.0000" stop-color="#0059ff"/><stop offset="0.1211" stop-color="#2450ff"/><stop offset="0.6789" stop-color="#e31eff"/><stop offset="0.7579" stop-color="#ff17fd"/><stop offset="0.9421" stop-color="#ff04c7"/><stop offset="1.0000" stop-color="#ff00bd"/></linearGradient><linearGradient id="s132" gradientUnits="userSpaceOnUse" x1="0.14875" y1="0" x2="0.32980" y2="0"><stop offset="0.0000" stop-color="#005bff"/><stop offset="0.1042" stop-color="#1f53ff"/><stop offset="0.6458" stop-color="#dd22ff"/><stop offset="0.7448" stop-color="#ff18fc"/><stop offset="0.9219" stop-color="#ff05c7"/><stop offset="1.0000" stop-color="#ff00b8"/></linearGradient><linearGradient id="s133" gradientUnits="userSpaceOnUse" x1="0.14844" y1="0" x2="0.33164" y2="0"><stop offset="0.0000" stop-color="#005dff"/><stop offset="0.0923" stop-color="#1c56ff"/><stop offset="0.6256" stop-color="#db25ff"/><stop offset="0.7231" stop-color="#ff1bfd"/><stop offset="0.8974" stop-color="#ff07c7"/><stop offset="1.0000" stop-color="#ff00b3"/></linearGradient><linearGradient id="s134" gradientUnits="userSpaceOnUse" x1="0.14814" y1="0" x2="0.33348" y2="0"><stop offset="0.0000" stop-color="#015fff"/><stop offset="0.0863" stop-color="#1b59ff"/><stop offset="0.6041" stop-color="#d828ff"/><stop offset="0.7056" stop-color="#ff1efe"/><stop offset="0.8731" stop-color="#ff0ac8"/><stop offset="1.0000" stop-color="#ff00ae"/></linearGradient><linearGradient id="s135" gradientUnits="userSpaceOnUse" x1="0.14784" y1="0" x2="0.33533" y2="0"><stop offset="0.0000" stop-color="#0162ff"/><stop offset="0.0754" stop-color="#175cff"/><stop offset="0.5829" stop-color="#d62bff"/><stop offset="0.6935" stop-color="#ff20fc"/><stop offset="0.8593" stop-color="#ff0bc6"/><stop offset="1.0000" stop-color="#ff00aa"/></linearGradient><linearGradient id="s136" gradientUnits="userSpaceOnUse" x1="0.14753" y1="0" x2="0.33717" y2="0"><stop offset="0.0000" stop-color="#0164ff"/><stop offset="0.0693" stop-color="#165fff"/><stop offset="0.5644" stop-color="#d42fff"/><stop offset="0.6733" stop-color="#ff23fd"/><stop offset="0.8366" stop-color="#ff0dc7"/><stop offset="0.9950" stop-color="#ff00a5"/><stop offset="1.0000" stop-color="#ff00a5"/></linearGradient><linearGradient id="s137" gradientUnits="userSpaceOnUse" x1="0.14723" y1="0" x2="0.33901" y2="0"><stop offset="0.0000" stop-color="#0167ff"/><stop offset="0.0637" stop-color="#1462ff"/><stop offset="0.5490" stop-color="#d331ff"/><stop offset="0.6569" stop-color="#ff26fe"/><stop offset="0.8137" stop-color="#ff10c8"/><stop offset="0.9951" stop-color="#ff00a1"/><stop offset="1.0000" stop-color="#ff00a1"/></linearGradient><linearGradient id="s138" gradientUnits="userSpaceOnUse" x1="0.14692" y1="0" x2="0.34086" y2="0"><stop offset="0.0000" stop-color="#0169ff"/><stop offset="0.0583" stop-color="#1365ff"/><stop offset="0.5340" stop-color="#d234ff"/><stop offset="0.6456" stop-color="#ff28fc"/><stop offset="0.8010" stop-color="#ff11c6"/><stop offset="0.9903" stop-color="#ff009c"/><stop offset="1.0000" stop-color="#ff009c"/></linearGradient><linearGradient id="s139" gradientUnits="userSpaceOnUse" x1="0.14662" y1="0" x2="0.34270" y2="0"><stop offset="0.0000" stop-color="#016cff"/><stop offset="0.0526" stop-color="#1168ff"/><stop offset="0.5167" stop-color="#d038ff"/><stop offset="0.6268" stop-color="#ff2bfd"/><stop offset="0.7751" stop-color="#ff14c8"/><stop offset="0.9856" stop-color="#ff0098"/><stop offset="1.0000" stop-color="#ff0098"/></linearGradient><linearGradient id="s140" gradientUnits="userSpaceOnUse" x1="0.14631" y1="0" x2="0.34454" y2="0"><stop offset="0.0000" stop-color="#016eff"/><stop offset="0.0521" stop-color="#116aff"/><stop offset="0.5024" stop-color="#cf3bff"/><stop offset="0.6114" stop-color="#ff2efe"/><stop offset="0.7583" stop-color="#ff17c8"/><stop offset="0.9668" stop-color="#ff0297"/><stop offset="1.0000" stop-color="#ff0094"/></linearGradient><linearGradient id="s141" gradientUnits="userSpaceOnUse" x1="0.14601" y1="0" x2="0.34638" y2="0"><stop offset="0.0000" stop-color="#0171ff"/><stop offset="0.0469" stop-color="#106dff"/><stop offset="0.4883" stop-color="#ce3eff"/><stop offset="0.5962" stop-color="#ff31fe"/><stop offset="0.7371" stop-color="#ff19c9"/><stop offset="0.9390" stop-color="#ff0498"/><stop offset="1.0000" stop-color="#ff0090"/></linearGradient><linearGradient id="s142" gradientUnits="userSpaceOnUse" x1="0.14570" y1="0" x2="0.34823" y2="0"><stop offset="0.0000" stop-color="#0174ff"/><stop offset="0.0465" stop-color="#1070ff"/><stop offset="0.4791" stop-color="#cf41ff"/><stop offset="0.5860" stop-color="#ff33fc"/><stop offset="0.7256" stop-color="#ff1bc7"/><stop offset="0.9256" stop-color="#ff0597"/><stop offset="1.0000" stop-color="#ff008c"/></linearGradient><linearGradient id="s143" gradientUnits="userSpaceOnUse" x1="0.14540" y1="0" x2="0.35007" y2="0"><stop offset="0.0000" stop-color="#0177ff"/><stop offset="0.0413" stop-color="#0e73ff"/><stop offset="0.4633" stop-color="#cd44ff"/><stop offset="0.5688" stop-color="#ff37fe"/><stop offset="0.7064" stop-color="#ff1ec7"/><stop offset="0.8991" stop-color="#ff0797"/><stop offset="1.0000" stop-color="#ff0088"/></linearGradient><linearGradient id="s144" gradientUnits="userSpaceOnUse" x1="0.14509" y1="0" x2="0.35191" y2="0"><stop offset="0.0000" stop-color="#017aff"/><stop offset="0.0409" stop-color="#0e76ff"/><stop offset="0.4500" stop-color="#cc48ff"/><stop offset="0.5545" stop-color="#ff3afe"/><stop offset="0.6864" stop-color="#ff21c8"/><stop offset="0.8727" stop-color="#ff0a98"/><stop offset="1.0000" stop-color="#ff0084"/></linearGradient><linearGradient id="s145" gradientUnits="userSpaceOnUse" x1="0.14479" y1="0" x2="0.35375" y2="0"><stop offset="0.0000" stop-color="#017dff"/><stop offset="0.0360" stop-color="#0d7aff"/><stop offset="0.4369" stop-color="#cb4bff"/><stop offset="0.5450" stop-color="#ff3dfc"/><stop offset="0.6757" stop-color="#ff23c6"/><stop offset="0.8604" stop-color="#ff0b97"/><stop offset="1.0000" stop-color="#ff0080"/></linearGradient><linearGradient id="s146" gradientUnits="userSpaceOnUse" x1="0.14448" y1="0" x2="0.35560" y2="0"><stop offset="0.0000" stop-color="#0180ff"/><stop offset="0.0356" stop-color="#0d7dff"/><stop offset="0.4267" stop-color="#cb4eff"/><stop offset="0.5289" stop-color="#ff41fe"/><stop offset="0.6533" stop-color="#ff26c8"/><stop offset="0.8311" stop-color="#ff0e98"/><stop offset="1.0000" stop-color="#ff007c"/></linearGradient><linearGradient id="s147" gradientUnits="userSpaceOnUse" x1="0.14418" y1="0" x2="0.35744" y2="0"><stop offset="0.0000" stop-color="#0183ff"/><stop offset="0.0308" stop-color="#0b81ff"/><stop offset="0.4141" stop-color="#ca52ff"/><stop offset="0.5154" stop-color="#ff45fe"/><stop offset="0.6388" stop-color="#ff29c8"/><stop offset="0.8150" stop-color="#ff1097"/><stop offset="1.0000" stop-color="#ff0079"/></linearGradient><linearGradient id="s148" gradientUnits="userSpaceOnUse" x1="0.14388" y1="0" x2="0.35928" y2="0"><stop offset="0.0000" stop-color="#0186ff"/><stop offset="0.0306" stop-color="#0b84ff"/><stop offset="0.4017" stop-color="#c856ff"/><stop offset="0.5066" stop-color="#ff47fc"/><stop offset="0.6288" stop-color="#ff2bc6"/><stop offset="0.8035" stop-color="#ff1196"/><stop offset="1.0000" stop-color="#ff0075"/></linearGradient><linearGradient id="s149" gradientUnits="userSpaceOnUse" x1="0.14357" y1="0" x2="0.36113" y2="0"><stop offset="0.0000" stop-color="#018aff"/><stop offset="0.0303" stop-color="#0b87ff"/><stop offset="0.3939" stop-color="#c959ff"/><stop offset="0.4935" stop-color="#ff4bfc"/><stop offset="0.6104" stop-color="#ff2ec7"/><stop offset="0.7792" stop-color="#ff1497"/><stop offset="0.9957" stop-color="#ff0072"/><stop offset="1.0000" stop-color="#ff0072"/></linearGradient><linearGradient id="s150" gradientUnits="userSpaceOnUse" x1="0.14327" y1="0" x2="0.36297" y2="0"><stop offset="0.0000" stop-color="#018dff"/><stop offset="0.0256" stop-color="#098bff"/><stop offset="0.3803" stop-color="#c75eff"/><stop offset="0.4786" stop-color="#ff50fe"/><stop offset="0.5940" stop-color="#ff32c8"/><stop offset="0.7564" stop-color="#ff1798"/><stop offset="0.9872" stop-color="#ff006f"/><stop offset="1.0000" stop-color="#ff006e"/></linearGradient><linearGradient id="s151" gradientUnits="userSpaceOnUse" x1="0.14296" y1="0" x2="0.36481" y2="0"><stop offset="0.0000" stop-color="#0191ff"/><stop offset="0.0254" stop-color="#098fff"/><stop offset="0.3729" stop-color="#c861ff"/><stop offset="0.4703" stop-color="#ff52fc"/><stop offset="0.5847" stop-color="#ff34c6"/><stop offset="0.7458" stop-color="#ff1896"/><stop offset="0.9873" stop-color="#ff006b"/><stop offset="1.0000" stop-color="#ff006b"/></linearGradient><linearGradient id="s152" gradientUnits="userSpaceOnUse" x1="0.14266" y1="0" x2="0.36665" y2="0"><stop offset="0.0000" stop-color="#0195ff"/><stop offset="0.0252" stop-color="#0a93ff"/><stop offset="0.3613" stop-color="#c766ff"/><stop offset="0.4580" stop-color="#ff57fc"/><stop offset="0.5672" stop-color="#ff38c7"/><stop offset="0.7227" stop-color="#ff1b97"/><stop offset="0.9538" stop-color="#ff036d"/><stop offset="1.0000" stop-color="#ff0068"/></linearGradient><linearGradient id="s153" gradientUnits="userSpaceOnUse" x1="0.14235" y1="0" x2="0.36850" y2="0"><stop offset="0.0000" stop-color="#0199ff"/><stop offset="0.0249" stop-color="#0a97ff"/><stop offset="0.3527" stop-color="#c76aff"/><stop offset="0.4440" stop-color="#ff5cfe"/><stop offset="0.5477" stop-color="#ff3cc9"/><stop offset="0.6971" stop-color="#ff1f99"/><stop offset="0.9170" stop-color="#ff066e"/><stop offset="1.0000" stop-color="#ff0065"/></linearGradient><linearGradient id="s154" gradientUnits="userSpaceOnUse" x1="0.14205" y1="0" x2="0.37034" y2="0"><stop offset="0.0000" stop-color="#019dff"/><stop offset="0.0247" stop-color="#0a9bff"/><stop offset="0.3457" stop-color="#c86eff"/><stop offset="0.4321" stop-color="#ff61fe"/><stop offset="0.5350" stop-color="#ff3fc8"/><stop offset="0.6790" stop-color="#ff2299"/><stop offset="0.8930" stop-color="#ff086e"/><stop offset="1.0000" stop-color="#ff0062"/></linearGradient><linearGradient id="s155" gradientUnits="userSpaceOnUse" x1="0.14174" y1="0" x2="0.37218" y2="0"><stop offset="0.0000" stop-color="#01a1ff"/><stop offset="0.0204" stop-color="#089fff"/><stop offset="0.3306" stop-color="#c473ff"/><stop offset="0.4245" stop-color="#ff64fc"/><stop offset="0.5265" stop-color="#ff42c6"/><stop offset="0.6694" stop-color="#ff2497"/><stop offset="0.8816" stop-color="#ff096d"/><stop offset="1.0000" stop-color="#ff005e"/></linearGradient><linearGradient id="s156" gradientUnits="userSpaceOnUse" x1="0.14144" y1="0" x2="0.37403" y2="0"><stop offset="0.0000" stop-color="#01a5ff"/><stop offset="0.0202" stop-color="#08a3ff"/><stop offset="0.3239" stop-color="#c578ff"/><stop offset="0.4130" stop-color="#ff69fd"/><stop offset="0.5101" stop-color="#ff46c8"/><stop offset="0.6478" stop-color="#ff2798"/><stop offset="0.8543" stop-color="#ff0c6e"/><stop offset="1.0000" stop-color="#ff005b"/></linearGradient><linearGradient id="s157" gradientUnits="userSpaceOnUse" x1="0.14113" y1="0" x2="0.37587" y2="0"><stop offset="0.0000" stop-color="#01aaff"/><stop offset="0.0200" stop-color="#08a8ff"/><stop offset="0.3160" stop-color="#c57cff"/><stop offset="0.4000" stop-color="#ff6efe"/><stop offset="0.4960" stop-color="#ff4ac8"/><stop offset="0.6320" stop-color="#ff2a98"/><stop offset="0.8320" stop-color="#ff0e6e"/><stop offset="1.0000" stop-color="#ff0059"/></linearGradient><linearGradient id="s158" gradientUnits="userSpaceOnUse" x1="0.14083" y1="0" x2="0.37771" y2="0"><stop offset="0.0000" stop-color="#01aeff"/><stop offset="0.0198" stop-color="#08acff"/><stop offset="0.3095" stop-color="#c781ff"/><stop offset="0.3929" stop-color="#ff72fc"/><stop offset="0.4881" stop-color="#ff4dc6"/><stop offset="0.6230" stop-color="#ff2c96"/><stop offset="0.8214" stop-color="#ff0f6c"/><stop offset="1.0000" stop-color="#ff0056"/></linearGradient><linearGradient id="s159" gradientUnits="userSpaceOnUse" x1="0.14052" y1="0" x2="0.37955" y2="0"><stop offset="0.0000" stop-color="#01b3ff"/><stop offset="0.0197" stop-color="#08b1ff"/><stop offset="0.2992" stop-color="#c586ff"/><stop offset="0.3819" stop-color="#ff77fc"/><stop offset="0.4724" stop-color="#ff52c7"/><stop offset="0.6024" stop-color="#ff3097"/><stop offset="0.7953" stop-color="#ff126d"/><stop offset="1.0000" stop-color="#ff0053"/></linearGradient><linearGradient id="s160" gradientUnits="userSpaceOnUse" x1="0.14022" y1="0" x2="0.38140" y2="0"><stop offset="0.0000" stop-color="#01b8ff"/><stop offset="0.0195" stop-color="#08b6ff"/><stop offset="0.2918" stop-color="#c58bff"/><stop offset="0.3696" stop-color="#ff7efe"/><stop offset="0.4553" stop-color="#ff58c9"/><stop offset="0.5798" stop-color="#ff3599"/><stop offset="0.7626" stop-color="#ff166f"/><stop offset="1.0000" stop-color="#ff0050"/></linearGradient><linearGradient id="s161" gradientUnits="userSpaceOnUse" x1="0.13992" y1="0" x2="0.38324" y2="0"><stop offset="0.0000" stop-color="#01bdff"/><stop offset="0.0154" stop-color="#06bcff"/><stop offset="0.2819" stop-color="#c491ff"/><stop offset="0.3629" stop-color="#ff82fc"/><stop offset="0.4479" stop-color="#ff5ac7"/><stop offset="0.5714" stop-color="#ff3797"/><stop offset="0.7529" stop-color="#ff176d"/><stop offset="1.0000" stop-color="#ff004d"/></linearGradient><linearGradient id="s162" gradientUnits="userSpaceOnUse" x1="0.13961" y1="0" x2="0.38508" y2="0"><stop offset="0.0000" stop-color="#01c2ff"/><stop offset="0.0153" stop-color="#06c1ff"/><stop offset="0.2759" stop-color="#c597ff"/><stop offset="0.3525" stop-color="#ff88fc"/><stop offset="0.4368" stop-color="#ff5fc7"/><stop offset="0.5556" stop-color="#ff3a97"/><stop offset="0.7318" stop-color="#ff1a6d"/><stop offset="0.9923" stop-color="#ff004a"/><stop offset="1.0000" stop-color="#ff004a"/></linearGradient><linearGradient id="s163" gradientUnits="userSpaceOnUse" x1="0.13931" y1="0" x2="0.38693" y2="0"><stop offset="0.0000" stop-color="#01c8ff"/><stop offset="0.0152" stop-color="#06c6ff"/><stop offset="0.2662" stop-color="#c39dff"/><stop offset="0.3422" stop-color="#ff8efd"/><stop offset="0.4221" stop-color="#ff65c8"/><stop offset="0.5361" stop-color="#ff3f98"/><stop offset="0.7072" stop-color="#ff1e6e"/><stop offset="0.9772" stop-color="#ff0149"/><stop offset="1.0000" stop-color="#ff0048"/></linearGradient><linearGradient id="s164" gradientUnits="userSpaceOnUse" x1="0.13900" y1="0" x2="0.38877" y2="0"><stop offset="0.0000" stop-color="#01cdff"/><stop offset="0.0150" stop-color="#06ccff"/><stop offset="0.2594" stop-color="#c3a3ff"/><stop offset="0.3308" stop-color="#ff96ff"/><stop offset="0.4098" stop-color="#ff6ac9"/><stop offset="0.5226" stop-color="#ff4398"/><stop offset="0.6880" stop-color="#ff216e"/><stop offset="0.9511" stop-color="#ff0349"/><stop offset="1.0000" stop-color="#ff0045"/></linearGradient><linearGradient id="s165" gradientUnits="userSpaceOnUse" x1="0.13870" y1="0" x2="0.39061" y2="0"><stop offset="0.0000" stop-color="#01d3ff"/><stop offset="0.0149" stop-color="#07d2ff"/><stop offset="0.2537" stop-color="#c5a9ff"/><stop offset="0.3246" stop-color="#ff9afc"/><stop offset="0.4030" stop-color="#ff6dc6"/><stop offset="0.5112" stop-color="#ff4697"/><stop offset="0.6754" stop-color="#ff236c"/><stop offset="0.9328" stop-color="#ff0548"/><stop offset="1.0000" stop-color="#ff0043"/></linearGradient><linearGradient id="s166" gradientUnits="userSpaceOnUse" x1="0.13839" y1="0" x2="0.39245" y2="0"><stop offset="0.0000" stop-color="#01d9ff"/><stop offset="0.0148" stop-color="#07d8ff"/><stop offset="0.2444" stop-color="#c3b0ff"/><stop offset="0.3148" stop-color="#ffa1fd"/><stop offset="0.3889" stop-color="#ff74c8"/><stop offset="0.4963" stop-color="#ff4a97"/><stop offset="0.6556" stop-color="#ff266d"/><stop offset="0.9074" stop-color="#ff0748"/><stop offset="1.0000" stop-color="#ff0040"/></linearGradient><linearGradient id="s167" gradientUnits="userSpaceOnUse" x1="0.13809" y1="0" x2="0.39430" y2="0"><stop offset="0.0000" stop-color="#01e0ff"/><stop offset="0.0147" stop-color="#07dfff"/><stop offset="0.2381" stop-color="#c3b7ff"/><stop offset="0.3040" stop-color="#ffaaff"/><stop offset="0.3773" stop-color="#ff7ac8"/><stop offset="0.4799" stop-color="#ff4f98"/><stop offset="0.6337" stop-color="#ff2a6d"/><stop offset="0.8755" stop-color="#ff0a49"/><stop offset="1.0000" stop-color="#ff003e"/></linearGradient><linearGradient id="s168" gradientUnits="userSpaceOnUse" x1="0.13778" y1="0" x2="0.39614" y2="0"><stop offset="0.0000" stop-color="#01e7ff"/><stop offset="0.0145" stop-color="#07e5ff"/><stop offset="0.2327" stop-color="#c4beff"/><stop offset="0.2982" stop-color="#ffaffc"/><stop offset="0.3673" stop-color="#ff7fc8"/><stop offset="0.4655" stop-color="#ff5498"/><stop offset="0.6145" stop-color="#ff2e6d"/><stop offset="0.8473" stop-color="#ff0d49"/><stop offset="1.0000" stop-color="#ff003b"/></linearGradient><linearGradient id="s169" gradientUnits="userSpaceOnUse" x1="0.13748" y1="0" x2="0.39798" y2="0"><stop offset="0.0000" stop-color="#01eeff"/><stop offset="0.0144" stop-color="#07ecff"/><stop offset="0.2274" stop-color="#c6c5ff"/><stop offset="0.2888" stop-color="#ffb7fd"/><stop offset="0.3574" stop-color="#ff85c7"/><stop offset="0.4549" stop-color="#ff5897"/><stop offset="0.5993" stop-color="#ff316d"/><stop offset="0.8267" stop-color="#ff0f49"/><stop offset="1.0000" stop-color="#ff0039"/></linearGradient><linearGradient id="s170" gradientUnits="userSpaceOnUse" x1="0.13717" y1="0" x2="0.39983" y2="0"><stop offset="0.0000" stop-color="#01f5ff"/><stop offset="0.0108" stop-color="#04f4ff"/><stop offset="0.2151" stop-color="#c0ceff"/><stop offset="0.2796" stop-color="#ffbffd"/><stop offset="0.3441" stop-color="#ff8dc9"/><stop offset="0.4373" stop-color="#ff5f99"/><stop offset="0.5771" stop-color="#ff356e"/><stop offset="0.7957" stop-color="#ff1249"/><stop offset="1.0000" stop-color="#ff0036"/></linearGradient><linearGradient id="s171" gradientUnits="userSpaceOnUse" x1="0.13687" y1="0" x2="0.40167" y2="0"><stop offset="0.0000" stop-color="#01fdff"/><stop offset="0.0106" stop-color="#04fcff"/><stop offset="0.2092" stop-color="#c1d6ff"/><stop offset="0.2695" stop-color="#ffc9ff"/><stop offset="0.3333" stop-color="#ff94c9"/><stop offset="0.4220" stop-color="#ff659a"/><stop offset="0.5532" stop-color="#ff3b6f"/><stop offset="0.7624" stop-color="#ff164b"/><stop offset="1.0000" stop-color="#ff0034"/></linearGradient><linearGradient id="s172" gradientUnits="userSpaceOnUse" x1="0.13656" y1="0" x2="0.40351" y2="0"><stop offset="0.0000" stop-color="#01fffa"/><stop offset="0.0106" stop-color="#04fffa"/><stop offset="0.0810" stop-color="#47f7ff"/><stop offset="0.2641" stop-color="#ffcffc"/><stop offset="0.3239" stop-color="#ff9ac9"/><stop offset="0.4085" stop-color="#ff6b9a"/><stop offset="0.5352" stop-color="#ff3f70"/><stop offset="0.7324" stop-color="#ff1a4b"/><stop offset="1.0000" stop-color="#ff0032"/></linearGradient><linearGradient id="s173" gradientUnits="userSpaceOnUse" x1="0.13626" y1="0" x2="0.40535" y2="0"><stop offset="0.0000" stop-color="#01fff2"/><stop offset="0.0105" stop-color="#04fff2"/><stop offset="0.0979" stop-color="#5afbff"/><stop offset="0.2552" stop-color="#ffd9fd"/><stop offset="0.3147" stop-color="#ffa1c8"/><stop offset="0.3951" stop-color="#ff719a"/><stop offset="0.5140" stop-color="#ff4571"/><stop offset="0.6993" stop-color="#ff1f4d"/><stop offset="0.9930" stop-color="#ff0030"/><stop offset="1.0000" stop-color="#ff0030"/></linearGradient><linearGradient id="s174" gradientUnits="userSpaceOnUse" x1="0.13596" y1="0" x2="0.40720" y2="0"><stop offset="0.0000" stop-color="#01ffea"/><stop offset="0.0104" stop-color="#04ffeb"/><stop offset="0.1142" stop-color="#6dfffd"/><stop offset="0.2457" stop-color="#ffe5ff"/><stop offset="0.3010" stop-color="#ffaccb"/><stop offset="0.3772" stop-color="#ff7a9d"/><stop offset="0.4879" stop-color="#ff4d74"/><stop offset="0.6574" stop-color="#ff2650"/><stop offset="0.9377" stop-color="#ff0431"/><stop offset="1.0000" stop-color="#ff002d"/></linearGradient><linearGradient id="s175" gradientUnits="userSpaceOnUse" x1="0.13565" y1="0" x2="0.40904" y2="0"><stop offset="0.0000" stop-color="#01ffe3"/><stop offset="0.0103" stop-color="#04ffe3"/><stop offset="0.1134" stop-color="#6cfff5"/><stop offset="0.1821" stop-color="#befbff"/><stop offset="0.2405" stop-color="#ffebfc"/><stop offset="0.2921" stop-color="#ffb4cb"/><stop offset="0.3643" stop-color="#ff819d"/><stop offset="0.4674" stop-color="#ff5475"/><stop offset="0.6254" stop-color="#ff2b52"/><stop offset="0.8832" stop-color="#ff0933"/><stop offset="1.0000" stop-color="#ff002b"/></linearGradient><linearGradient id="s176" gradientUnits="userSpaceOnUse" x1="0.13535" y1="0" x2="0.41088" y2="0"><stop offset="0.0000" stop-color="#01ffdb"/><stop offset="0.0102" stop-color="#04ffdc"/><stop offset="0.1126" stop-color="#6cffec"/><stop offset="0.2014" stop-color="#dbfffe"/><stop offset="0.2321" stop-color="#fff7fd"/><stop offset="0.2799" stop-color="#ffbfcd"/><stop offset="0.3481" stop-color="#ff8aa0"/><stop offset="0.4437" stop-color="#ff5c78"/><stop offset="0.5904" stop-color="#ff3254"/><stop offset="0.8225" stop-color="#ff0f36"/><stop offset="1.0000" stop-color="#ff0029"/></linearGradient><linearGradient id="s177" gradientUnits="userSpaceOnUse" x1="0.13504" y1="0" x2="0.41272" y2="0"><stop offset="0.0000" stop-color="#01ffd4"/><stop offset="0.0135" stop-color="#07ffd5"/><stop offset="0.1149" stop-color="#6effe5"/><stop offset="0.2027" stop-color="#ddfff5"/><stop offset="0.2264" stop-color="#fffffb"/><stop offset="0.2736" stop-color="#ffc5cb"/><stop offset="0.3378" stop-color="#ff919f"/><stop offset="0.4291" stop-color="#ff6278"/><stop offset="0.5676" stop-color="#ff3855"/><stop offset="0.7872" stop-color="#ff1337"/><stop offset="1.0000" stop-color="#ff0027"/></linearGradient><linearGradient id="s178" gradientUnits="userSpaceOnUse" x1="0.13474" y1="0" x2="0.41457" y2="0"><stop offset="0.0000" stop-color="#01ffcd"/><stop offset="0.0134" stop-color="#07ffce"/><stop offset="0.1174" stop-color="#71ffdd"/><stop offset="0.2047" stop-color="#e0ffed"/><stop offset="0.2282" stop-color="#fffcef"/><stop offset="0.2752" stop-color="#ffc4c2"/><stop offset="0.3423" stop-color="#ff8e97"/><stop offset="0.4362" stop-color="#ff5f71"/><stop offset="0.5772" stop-color="#ff3550"/><stop offset="0.8020" stop-color="#ff1233"/><stop offset="1.0000" stop-color="#ff0025"/></linearGradient><linearGradient id="s179" gradientUnits="userSpaceOnUse" x1="0.13443" y1="0" x2="0.41641" y2="0"><stop offset="0.0000" stop-color="#01ffc6"/><stop offset="0.0133" stop-color="#07ffc7"/><stop offset="0.1167" stop-color="#70ffd5"/><stop offset="0.2033" stop-color="#deffe4"/><stop offset="0.2267" stop-color="#ffffe8"/><stop offset="0.2733" stop-color="#ffc5bc"/><stop offset="0.3400" stop-color="#ff8f92"/><stop offset="0.4333" stop-color="#ff606d"/><stop offset="0.5733" stop-color="#ff364d"/><stop offset="0.7967" stop-color="#ff1231"/><stop offset="1.0000" stop-color="#ff0023"/></linearGradient><linearGradient id="s180" gradientUnits="userSpaceOnUse" x1="0.13413" y1="0" x2="0.41825" y2="0"><stop offset="0.0000" stop-color="#01ffbf"/><stop offset="0.0132" stop-color="#07ffc0"/><stop offset="0.1159" stop-color="#6fffcd"/><stop offset="0.2020" stop-color="#dcffdb"/><stop offset="0.2285" stop-color="#fffcdd"/><stop offset="0.2781" stop-color="#ffc1b1"/><stop offset="0.3444" stop-color="#ff8d8a"/><stop offset="0.4404" stop-color="#ff5d67"/><stop offset="0.5828" stop-color="#ff3448"/><stop offset="0.8113" stop-color="#ff112d"/><stop offset="1.0000" stop-color="#ff0021"/></linearGradient><linearGradient id="s181" gradientUnits="userSpaceOnUse" x1="0.13382" y1="0" x2="0.42010" y2="0"><stop offset="0.0000" stop-color="#01ffb8"/><stop offset="0.0131" stop-color="#07ffb9"/><stop offset="0.1148" stop-color="#6effc5"/><stop offset="0.2033" stop-color="#deffd3"/><stop offset="0.2262" stop-color="#ffffd7"/><stop offset="0.2754" stop-color="#ffc3ac"/><stop offset="0.3410" stop-color="#ff8f86"/><stop offset="0.4361" stop-color="#ff5f63"/><stop offset="0.5770" stop-color="#ff3545"/><stop offset="0.8033" stop-color="#ff112b"/><stop offset="1.0000" stop-color="#ff001f"/></linearGradient><linearGradient id="s182" gradientUnits="userSpaceOnUse" x1="0.13352" y1="0" x2="0.42194" y2="0"><stop offset="0.0000" stop-color="#01ffb1"/><stop offset="0.0130" stop-color="#07ffb2"/><stop offset="0.1173" stop-color="#71ffbe"/><stop offset="0.2052" stop-color="#e0ffca"/><stop offset="0.2280" stop-color="#fffdcc"/><stop offset="0.2769" stop-color="#ffc2a3"/><stop offset="0.3420" stop-color="#ff8e80"/><stop offset="0.4365" stop-color="#ff5f5f"/><stop offset="0.5765" stop-color="#ff3642"/><stop offset="0.8013" stop-color="#ff1229"/><stop offset="1.0000" stop-color="#ff001d"/></linearGradient><linearGradient id="s183" gradientUnits="userSpaceOnUse" x1="0.13321" y1="0" x2="0.42378" y2="0"><stop offset="0.0000" stop-color="#01ffab"/><stop offset="0.0129" stop-color="#07ffab"/><stop offset="0.1165" stop-color="#70ffb6"/><stop offset="0.2039" stop-color="#dfffc2"/><stop offset="0.2265" stop-color="#ffffc5"/><stop offset="0.2751" stop-color="#ffc49e"/><stop offset="0.3398" stop-color="#ff907b"/><stop offset="0.4337" stop-color="#ff605b"/><stop offset="0.5728" stop-color="#ff363f"/><stop offset="0.7961" stop-color="#ff1227"/><stop offset="1.0000" stop-color="#ff001b"/></linearGradient><linearGradient id="s184" gradientUnits="userSpaceOnUse" x1="0.13291" y1="0" x2="0.42562" y2="0"><stop offset="0.0000" stop-color="#01ffa4"/><stop offset="0.0128" stop-color="#07ffa5"/><stop offset="0.1154" stop-color="#6fffaf"/><stop offset="0.2019" stop-color="#dcffba"/><stop offset="0.2276" stop-color="#fffdbc"/><stop offset="0.2756" stop-color="#ffc396"/><stop offset="0.3429" stop-color="#ff8e74"/><stop offset="0.4391" stop-color="#ff5e55"/><stop offset="0.5833" stop-color="#ff343b"/><stop offset="0.8109" stop-color="#ff1124"/><stop offset="1.0000" stop-color="#ff0019"/></linearGradient><linearGradient id="s185" gradientUnits="userSpaceOnUse" x1="0.13260" y1="0" x2="0.42747" y2="0"><stop offset="0.0000" stop-color="#01ff9e"/><stop offset="0.0127" stop-color="#07ff9e"/><stop offset="0.1146" stop-color="#6effa7"/><stop offset="0.2006" stop-color="#daffb1"/><stop offset="0.2261" stop-color="#ffffb5"/><stop offset="0.2739" stop-color="#ffc591"/><stop offset="0.3408" stop-color="#ff8f6f"/><stop offset="0.4331" stop-color="#ff6053"/><stop offset="0.5732" stop-color="#ff3639"/><stop offset="0.7962" stop-color="#ff1222"/><stop offset="1.0000" stop-color="#ff0017"/></linearGradient><linearGradient id="s186" gradientUnits="userSpaceOnUse" x1="0.13230" y1="0" x2="0.42931" y2="0"><stop offset="0.0000" stop-color="#01ff97"/><stop offset="0.0127" stop-color="#07ff98"/><stop offset="0.1171" stop-color="#71ffa1"/><stop offset="0.2057" stop-color="#e1ffaa"/><stop offset="0.2278" stop-color="#fffdab"/><stop offset="0.2753" stop-color="#ffc389"/><stop offset="0.3418" stop-color="#ff8e6a"/><stop offset="0.4367" stop-color="#ff5f4e"/><stop offset="0.5791" stop-color="#ff3535"/><stop offset="0.8070" stop-color="#ff111f"/><stop offset="1.0000" stop-color="#ff0015"/></linearGradient><linearGradient id="s187" gradientUnits="userSpaceOnUse" x1="0.13200" y1="0" x2="0.43115" y2="0"><stop offset="0.0000" stop-color="#01ff91"/><stop offset="0.0126" stop-color="#07ff91"/><stop offset="0.1164" stop-color="#70ff99"/><stop offset="0.2044" stop-color="#dfffa2"/><stop offset="0.2264" stop-color="#ffffa4"/><stop offset="0.2736" stop-color="#ffc584"/><stop offset="0.3396" stop-color="#ff9065"/><stop offset="0.4340" stop-color="#ff604a"/><stop offset="0.5755" stop-color="#ff3632"/><stop offset="0.7987" stop-color="#ff121e"/><stop offset="1.0000" stop-color="#ff0014"/></linearGradient><linearGradient id="s188" gradientUnits="userSpaceOnUse" x1="0.13169" y1="0" x2="0.43300" y2="0"><stop offset="0.0000" stop-color="#01ff8b"/><stop offset="0.0125" stop-color="#07ff8b"/><stop offset="0.1153" stop-color="#6fff92"/><stop offset="0.2025" stop-color="#ddff9a"/><stop offset="0.2274" stop-color="#fffd9c"/><stop offset="0.2741" stop-color="#ffc47d"/><stop offset="0.3396" stop-color="#ff9060"/><stop offset="0.4330" stop-color="#ff6046"/><stop offset="0.5732" stop-color="#ff362f"/><stop offset="0.7944" stop-color="#ff121c"/><stop offset="1.0000" stop-color="#ff0012"/></linearGradient><linearGradient id="s189" gradientUnits="userSpaceOnUse" x1="0.13139" y1="0" x2="0.43484" y2="0"><stop offset="0.0000" stop-color="#01ff85"/><stop offset="0.0124" stop-color="#07ff85"/><stop offset="0.1146" stop-color="#6eff8c"/><stop offset="0.2012" stop-color="#dbff92"/><stop offset="0.2260" stop-color="#ffff95"/><stop offset="0.2755" stop-color="#ffc375"/><stop offset="0.3406" stop-color="#ff8f5a"/><stop offset="0.4334" stop-color="#ff6042"/><stop offset="0.5728" stop-color="#ff362c"/><stop offset="0.7957" stop-color="#ff121a"/><stop offset="1.0000" stop-color="#ff0010"/></linearGradient><linearGradient id="s190" gradientUnits="userSpaceOnUse" x1="0.13108" y1="0" x2="0.43668" y2="0"><stop offset="0.0000" stop-color="#01ff7f"/><stop offset="0.0123" stop-color="#06ff7f"/><stop offset="0.1169" stop-color="#71ff85"/><stop offset="0.2031" stop-color="#deff8b"/><stop offset="0.2277" stop-color="#fffd8c"/><stop offset="0.2769" stop-color="#ffc26e"/><stop offset="0.3446" stop-color="#ff8c54"/><stop offset="0.4400" stop-color="#ff5d3d"/><stop offset="0.5846" stop-color="#ff3428"/><stop offset="0.8154" stop-color="#ff1016"/><stop offset="1.0000" stop-color="#ff000e"/></linearGradient><linearGradient id="s191" gradientUnits="userSpaceOnUse" x1="0.13078" y1="0" x2="0.43852" y2="0"><stop offset="0.0000" stop-color="#01ff79"/><stop offset="0.0122" stop-color="#06ff79"/><stop offset="0.1159" stop-color="#70ff7e"/><stop offset="0.2043" stop-color="#dfff84"/><stop offset="0.2256" stop-color="#feff85"/><stop offset="0.2774" stop-color="#ffc168"/><stop offset="0.3445" stop-color="#ff8c4f"/><stop offset="0.4390" stop-color="#ff5e39"/><stop offset="0.5823" stop-color="#ff3425"/><stop offset="0.8110" stop-color="#ff1114"/><stop offset="1.0000" stop-color="#ff000d"/></linearGradient><linearGradient id="s192" gradientUnits="userSpaceOnUse" x1="0.13047" y1="0" x2="0.44037" y2="0"><stop offset="0.0000" stop-color="#01ff73"/><stop offset="0.0121" stop-color="#06ff73"/><stop offset="0.1152" stop-color="#6fff78"/><stop offset="0.2030" stop-color="#deff7c"/><stop offset="0.2273" stop-color="#fffd7d"/><stop offset="0.2758" stop-color="#ffc363"/><stop offset="0.3424" stop-color="#ff8e4b"/><stop offset="0.4364" stop-color="#ff5f36"/><stop offset="0.5788" stop-color="#ff3523"/><stop offset="0.8061" stop-color="#ff1113"/><stop offset="1.0000" stop-color="#ff000b"/></linearGradient><linearGradient id="s193" gradientUnits="userSpaceOnUse" x1="0.13017" y1="0" x2="0.44221" y2="0"><stop offset="0.0000" stop-color="#01ff6d"/><stop offset="0.0120" stop-color="#06ff6d"/><stop offset="0.1145" stop-color="#6eff71"/><stop offset="0.2018" stop-color="#dcff75"/><stop offset="0.2259" stop-color="#ffff76"/><stop offset="0.2741" stop-color="#ffc45d"/><stop offset="0.3404" stop-color="#ff8f47"/><stop offset="0.4337" stop-color="#ff6032"/><stop offset="0.5753" stop-color="#ff3620"/><stop offset="0.7982" stop-color="#ff1211"/><stop offset="1.0000" stop-color="#ff0009"/></linearGradient><linearGradient id="s194" gradientUnits="userSpaceOnUse" x1="0.12986" y1="0" x2="0.44405" y2="0"><stop offset="0.0000" stop-color="#01ff67"/><stop offset="0.0120" stop-color="#06ff68"/><stop offset="0.1138" stop-color="#6dff6b"/><stop offset="0.2006" stop-color="#daff6e"/><stop offset="0.2275" stop-color="#fffd6e"/><stop offset="0.2754" stop-color="#ffc357"/><stop offset="0.3413" stop-color="#ff8f41"/><stop offset="0.4371" stop-color="#ff5f2e"/><stop offset="0.5778" stop-color="#ff351d"/><stop offset="0.8024" stop-color="#ff120f"/><stop offset="1.0000" stop-color="#ff0008"/></linearGradient><linearGradient id="s195" gradientUnits="userSpaceOnUse" x1="0.12956" y1="0" x2="0.44590" y2="0"><stop offset="0.0000" stop-color="#01ff62"/><stop offset="0.0119" stop-color="#06ff62"/><stop offset="0.1157" stop-color="#70ff65"/><stop offset="0.2018" stop-color="#dcff67"/><stop offset="0.2255" stop-color="#feff68"/><stop offset="0.2760" stop-color="#ffc351"/><stop offset="0.3412" stop-color="#ff8f3d"/><stop offset="0.4362" stop-color="#ff5f2a"/><stop offset="0.5786" stop-color="#ff351a"/><stop offset="0.8042" stop-color="#ff110d"/><stop offset="1.0000" stop-color="#ff0006"/></linearGradient><linearGradient id="s196" gradientUnits="userSpaceOnUse" x1="0.12925" y1="0" x2="0.44774" y2="0"><stop offset="0.0000" stop-color="#01ff5c"/><stop offset="0.0118" stop-color="#06ff5c"/><stop offset="0.1150" stop-color="#6fff5e"/><stop offset="0.2035" stop-color="#deff60"/><stop offset="0.2271" stop-color="#fffe60"/><stop offset="0.2743" stop-color="#ffc44c"/><stop offset="0.3392" stop-color="#ff9039"/><stop offset="0.4336" stop-color="#ff6027"/><stop offset="0.5752" stop-color="#ff3618"/><stop offset="0.7994" stop-color="#ff120b"/><stop offset="1.0000" stop-color="#ff0004"/></linearGradient><linearGradient id="s197" gradientUnits="userSpaceOnUse" x1="0.12895" y1="0" x2="0.44958" y2="0"><stop offset="0.0000" stop-color="#01ff57"/><stop offset="0.0117" stop-color="#06ff57"/><stop offset="0.1144" stop-color="#6eff58"/><stop offset="0.2023" stop-color="#ddff59"/><stop offset="0.2258" stop-color="#ffff5a"/><stop offset="0.2757" stop-color="#ffc345"/><stop offset="0.3431" stop-color="#ff8d33"/><stop offset="0.4370" stop-color="#ff5f23"/><stop offset="0.5777" stop-color="#ff3515"/><stop offset="0.8035" stop-color="#ff1109"/><stop offset="1.0000" stop-color="#ff0003"/></linearGradient><linearGradient id="s198" gradientUnits="userSpaceOnUse" x1="0.12864" y1="0" x2="0.45142" y2="0"><stop offset="0.0000" stop-color="#01ff52"/><stop offset="0.0116" stop-color="#06ff52"/><stop offset="0.1163" stop-color="#70ff52"/><stop offset="0.2035" stop-color="#deff53"/><stop offset="0.2267" stop-color="#fffe53"/><stop offset="0.2762" stop-color="#ffc240"/><stop offset="0.3430" stop-color="#ff8d2f"/><stop offset="0.4390" stop-color="#ff5e1f"/><stop offset="0.5814" stop-color="#ff3512"/><stop offset="0.8081" stop-color="#ff1107"/><stop offset="1.0000" stop-color="#ff0001"/></linearGradient><linearGradient id="s199" gradientUnits="userSpaceOnUse" x1="0.12834" y1="0" x2="0.45142" y2="0"><stop offset="0.0000" stop-color="#01ff4c"/><stop offset="0.0116" stop-color="#06ff4c"/><stop offset="0.1163" stop-color="#70ff4c"/><stop offset="0.2035" stop-color="#ddff4c"/><stop offset="0.2297" stop-color="#fffc4b"/><stop offset="0.2791" stop-color="#ffc13a"/><stop offset="0.3459" stop-color="#ff8d2a"/><stop offset="0.4419" stop-color="#ff5e1c"/><stop offset="0.5872" stop-color="#ff340f"/><stop offset="0.8169" stop-color="#ff1005"/><stop offset="1.0000" stop-color="#ff0100"/></linearGradient><linearGradient id="s200" gradientUnits="userSpaceOnUse" x1="0.12804" y1="0" x2="0.43952" y2="0"><stop offset="0.0000" stop-color="#01ff47"/><stop offset="0.0120" stop-color="#06ff47"/><stop offset="0.1205" stop-color="#6fff46"/><stop offset="0.2139" stop-color="#dfff46"/><stop offset="0.2380" stop-color="#fffe45"/><stop offset="0.2892" stop-color="#ffc335"/><stop offset="0.3584" stop-color="#ff8e26"/><stop offset="0.4578" stop-color="#ff5f19"/><stop offset="0.6054" stop-color="#ff360d"/><stop offset="0.8404" stop-color="#ff1203"/><stop offset="1.0000" stop-color="#ff0600"/></linearGradient><linearGradient id="s201" gradientUnits="userSpaceOnUse" x1="0.12773" y1="0" x2="0.41943" y2="0"><stop offset="0.0000" stop-color="#01ff42"/><stop offset="0.0129" stop-color="#06ff42"/><stop offset="0.1290" stop-color="#6eff41"/><stop offset="0.2290" stop-color="#deff3f"/><stop offset="0.2548" stop-color="#ffff3f"/><stop offset="0.3097" stop-color="#ffc430"/><stop offset="0.3839" stop-color="#ff8f22"/><stop offset="0.4903" stop-color="#ff6016"/><stop offset="0.6484" stop-color="#ff360b"/><stop offset="0.9000" stop-color="#ff1202"/><stop offset="1.0000" stop-color="#ff0c00"/></linearGradient><linearGradient id="s202" gradientUnits="userSpaceOnUse" x1="0.12743" y1="0" x2="0.39934" y2="0"><stop offset="0.0000" stop-color="#01ff3d"/><stop offset="0.0138" stop-color="#06ff3d"/><stop offset="0.1384" stop-color="#6dff3b"/><stop offset="0.2457" stop-color="#dcff39"/><stop offset="0.2768" stop-color="#fffd38"/><stop offset="0.3356" stop-color="#ffc32a"/><stop offset="0.4152" stop-color="#ff8f1d"/><stop offset="0.5294" stop-color="#ff6012"/><stop offset="0.7024" stop-color="#ff3608"/><stop offset="0.9619" stop-color="#ff1400"/><stop offset="1.0000" stop-color="#ff1400"/></linearGradient><linearGradient id="s203" gradientUnits="userSpaceOnUse" x1="0.12712" y1="0" x2="0.37925" y2="0"><stop offset="0.0000" stop-color="#01ff38"/><stop offset="0.0187" stop-color="#09ff38"/><stop offset="0.1567" stop-color="#73ff35"/><stop offset="0.2724" stop-color="#e2ff32"/><stop offset="0.2985" stop-color="#feff32"/><stop offset="0.3657" stop-color="#ffc224"/><stop offset="0.4552" stop-color="#ff8d19"/><stop offset="0.5821" stop-color="#ff5d0e"/><stop offset="0.7724" stop-color="#ff3405"/><stop offset="0.9739" stop-color="#ff1c00"/><stop offset="1.0000" stop-color="#ff1c00"/></linearGradient><linearGradient id="s204" gradientUnits="userSpaceOnUse" x1="0.12682" y1="0" x2="0.35915" y2="0"><stop offset="0.0000" stop-color="#01ff33"/><stop offset="0.0202" stop-color="#08ff33"/><stop offset="0.1700" stop-color="#72ff30"/><stop offset="0.2955" stop-color="#e0ff2c"/><stop offset="0.3279" stop-color="#fffe2b"/><stop offset="0.3968" stop-color="#ffc420"/><stop offset="0.4939" stop-color="#ff8e15"/><stop offset="0.6316" stop-color="#ff5f0b"/><stop offset="0.8381" stop-color="#ff3503"/><stop offset="0.9757" stop-color="#ff2600"/><stop offset="1.0000" stop-color="#ff2600"/></linearGradient><linearGradient id="s205" gradientUnits="userSpaceOnUse" x1="0.12651" y1="0" x2="0.33906" y2="0"><stop offset="0.0000" stop-color="#01ff2e"/><stop offset="0.0221" stop-color="#08ff2e"/><stop offset="0.1858" stop-color="#71ff2a"/><stop offset="0.3230" stop-color="#deff26"/><stop offset="0.3628" stop-color="#fffc24"/><stop offset="0.4425" stop-color="#ffc01a"/><stop offset="0.5487" stop-color="#ff8c10"/><stop offset="0.7035" stop-color="#ff5c08"/><stop offset="0.9336" stop-color="#ff3300"/><stop offset="1.0000" stop-color="#ff3200"/></linearGradient><linearGradient id="s206" gradientUnits="userSpaceOnUse" x1="0.12621" y1="0" x2="0.31897" y2="0"><stop offset="0.0000" stop-color="#01ff29"/><stop offset="0.0244" stop-color="#08ff29"/><stop offset="0.2049" stop-color="#70ff25"/><stop offset="0.3610" stop-color="#e0ff20"/><stop offset="0.4000" stop-color="#fffe1f"/><stop offset="0.4829" stop-color="#ffc515"/><stop offset="0.6000" stop-color="#ff8f0d"/><stop offset="0.7659" stop-color="#ff6005"/><stop offset="0.9512" stop-color="#ff4000"/><stop offset="1.0000" stop-color="#ff4000"/></linearGradient><linearGradient id="s207" gradientUnits="userSpaceOnUse" x1="0.12590" y1="0" x2="0.29888" y2="0"><stop offset="0.0000" stop-color="#01ff24"/><stop offset="0.0272" stop-color="#08ff24"/><stop offset="0.2337" stop-color="#73ff1f"/><stop offset="0.4076" stop-color="#e2ff1a"/><stop offset="0.4511" stop-color="#fffc18"/><stop offset="0.5489" stop-color="#ffc110"/><stop offset="0.6793" stop-color="#ff8d08"/><stop offset="0.8696" stop-color="#ff5e02"/><stop offset="0.9511" stop-color="#ff5200"/><stop offset="1.0000" stop-color="#ff5200"/></linearGradient><linearGradient id="s208" gradientUnits="userSpaceOnUse" x1="0.12560" y1="0" x2="0.27879" y2="0"><stop offset="0.0000" stop-color="#01ff20"/><stop offset="0.0307" stop-color="#08ff1f"/><stop offset="0.2638" stop-color="#72ff1a"/><stop offset="0.4601" stop-color="#e0ff14"/><stop offset="0.5092" stop-color="#fffe13"/><stop offset="0.6196" stop-color="#ffc30b"/><stop offset="0.7669" stop-color="#ff8f05"/><stop offset="0.9325" stop-color="#ff6900"/><stop offset="1.0000" stop-color="#ff6900"/></linearGradient><linearGradient id="s209" gradientUnits="userSpaceOnUse" x1="0.12529" y1="0" x2="0.25870" y2="0"><stop offset="0.0000" stop-color="#01ff1b"/><stop offset="0.0352" stop-color="#08ff1b"/><stop offset="0.3028" stop-color="#71ff15"/><stop offset="0.5282" stop-color="#dfff0e"/><stop offset="0.5915" stop-color="#fffc0c"/><stop offset="0.7183" stop-color="#ffc206"/><stop offset="0.8944" stop-color="#ff8c01"/><stop offset="0.9648" stop-color="#ff8800"/><stop offset="1.0000" stop-color="#ff8800"/></linearGradient><linearGradient id="s210" gradientUnits="userSpaceOnUse" x1="0.12499" y1="0" x2="0.23861" y2="0"><stop offset="0.0000" stop-color="#01ff16"/><stop offset="0.0413" stop-color="#08ff16"/><stop offset="0.3554" stop-color="#70ff10"/><stop offset="0.6281" stop-color="#e0ff09"/><stop offset="0.6942" stop-color="#fffe07"/><stop offset="0.8430" stop-color="#ffc402"/><stop offset="0.9091" stop-color="#ffb300"/><stop offset="1.0000" stop-color="#ffb300"/></linearGradient><linearGradient id="s211" gradientUnits="userSpaceOnUse" x1="0.12468" y1="0" x2="0.21852" y2="0"><stop offset="0.0000" stop-color="#01ff12"/><stop offset="0.0500" stop-color="#08ff11"/><stop offset="0.4400" stop-color="#72ff0a"/><stop offset="0.7700" stop-color="#e2ff03"/><stop offset="0.8500" stop-color="#fffd01"/><stop offset="0.8900" stop-color="#fff300"/><stop offset="1.0000" stop-color="#fff300"/></linearGradient><linearGradient id="s212" gradientUnits="userSpaceOnUse" x1="0.12438" y1="0" x2="0.19843" y2="0"><stop offset="0.0000" stop-color="#01ff0d"/><stop offset="0.0641" stop-color="#08ff0d"/><stop offset="0.5513" stop-color="#70ff05"/><stop offset="0.8462" stop-color="#baff00"/><stop offset="1.0000" stop-color="#baff00"/></linearGradient><linearGradient id="s213" gradientUnits="userSpaceOnUse" x1="0.12408" y1="0" x2="0.17834" y2="0"><stop offset="0.0000" stop-color="#01ff09"/><stop offset="0.0877" stop-color="#08ff08"/><stop offset="0.7544" stop-color="#70ff00"/><stop offset="0.8246" stop-color="#75ff00"/><stop offset="1.0000" stop-color="#75ff00"/></linearGradient><linearGradient id="s214" gradientUnits="userSpaceOnUse" x1="0.12377" y1="0" x2="0.15825" y2="0"><stop offset="0.0000" stop-color="#01ff05"/><stop offset="0.1389" stop-color="#08ff04"/><stop offset="0.6944" stop-color="#38ff00"/><stop offset="1.0000" stop-color="#38ff00"/></linearGradient><linearGradient id="s215" gradientUnits="userSpaceOnUse" x1="0.12359" y1="0" x2="0.13815" y2="0"><stop offset="0.0000" stop-color="#01ff00"/><stop offset="1.0000" stop-color="#03ff00"/></linearGradient><linearGradient id="s216" gradientUnits="userSpaceOnUse" x1="0.12359" y1="0" x2="0.12723" y2="0"><stop offset="0.0000" stop-color="#01ff00"/><stop offset="1.0000" stop-color="#01ff00"/></linearGradient><clipPath id="cIns"><rect x="1442.2" y="459.3" width="212.1" height="144.5"/></clipPath><linearGradient id="h217" x1="0" y1="0" x2="1" y2="0"><stop offset="0" stop-color="#6a9c00"/><stop offset="0.5" stop-color="#8e9800"/><stop offset="1" stop-color="#a08a00"/></linearGradient><linearGradient id="i218" gradientUnits="userSpaceOnUse" x1="1450" y1="470" x2="1650" y2="600"><stop offset="0" stop-color="#a8ff00"/><stop offset="0.45" stop-color="#ffff00"/><stop offset="1" stop-color="#ffb000"/></linearGradient><linearGradient id="i219" gradientUnits="userSpaceOnUse" x1="1450" y1="470" x2="1650" y2="600"><stop offset="0" stop-color="#659a00"/><stop offset="0.5" stop-color="#929500"/><stop offset="1" stop-color="#9a7400"/></linearGradient><linearGradient id="v220" x1="0" y1="0" x2="0" y2="1"><stop offset="0" stop-color="#464646"/><stop offset="1" stop-color="#222222"/></linearGradient><linearGradient id="v221" x1="0" y1="0" x2="0" y2="1"><stop offset="0" stop-color="#a8a8a8"/><stop offset="0.55" stop-color="#7a7a7a"/><stop offset="1" stop-color="#555555"/></linearGradient><linearGradient id="v222" x1="0" y1="0" x2="0" y2="1"><stop offset="0" stop-color="#6a6a6a"/><stop offset="1" stop-color="#9a9a9a"/></linearGradient><linearGradient id="v223" x1="0" y1="0" x2="0" y2="1"><stop offset="0" stop-color="#1e1e1e"/><stop offset="1" stop-color="#383838"/></linearGradient><linearGradient id="v224" x1="0" y1="0" x2="0" y2="1"><stop offset="0" stop-color="#a0a0a0"/><stop offset="1" stop-color="#707070"/></linearGradient><linearGradient id="v225" x1="0" y1="0" x2="0" y2="1"><stop offset="0" stop-color="#8a8a8a"/><stop offset="1" stop-color="#6a6a6a"/></linearGradient><linearGradient id="v226" x1="0" y1="0" x2="0" y2="1"><stop offset="0" stop-color="#6a6a6a"/><stop offset="1" stop-color="#a0a0a0"/></linearGradient><linearGradient id="v227" x1="0" y1="0" x2="0" y2="1"><stop offset="0" stop-color="#b8b8b8"/><stop offset="0.5" stop-color="#a0a0a0"/><stop offset="0.52" stop-color="#8a8a8a"/><stop offset="1" stop-color="#a0a0a0"/></linearGradient><linearGradient id="v228" x1="0" y1="0" x2="0" y2="1"><stop offset="0" stop-color="#b4b4b4"/><stop offset="1" stop-color="#727272"/></linearGradient><linearGradient id="v229" x1="0" y1="0" x2="0" y2="1"><stop offset="0" stop-color="#6e6e6e"/><stop offset="1" stop-color="#a8a8a8"/></linearGradient><linearGradient id="v230" x1="0" y1="0" x2="0" y2="1"><stop offset="0" stop-color="#6e6e6e"/><stop offset="1" stop-color="#a8a8a8"/></linearGradient><linearGradient id="v231" x1="0" y1="0" x2="0" y2="1"><stop offset="0" stop-color="#6e6e6e"/><stop offset="1" stop-color="#a8a8a8"/></linearGradient><linearGradient id="v232" x1="0" y1="0" x2="0" y2="1"><stop offset="0" stop-color="#6e6e6e"/><stop offset="1" stop-color="#a8a8a8"/></linearGradient><linearGradient id="v233" x1="0" y1="0" x2="0" y2="1"><stop offset="0" stop-color="#6e6e6e"/><stop offset="1" stop-color="#a8a8a8"/></linearGradient><linearGradient id="v234" x1="0" y1="0" x2="0" y2="1"><stop offset="0" stop-color="#6e6e6e"/><stop offset="1" stop-color="#a8a8a8"/></linearGradient><linearGradient id="v235" x1="0" y1="0" x2="0" y2="1"><stop offset="0" stop-color="#6e6e6e"/><stop offset="1" stop-color="#a8a8a8"/></linearGradient><linearGradient id="v236" x1="0" y1="0" x2="0" y2="1"><stop offset="0" stop-color="#6e6e6e"/><stop offset="1" stop-color="#a8a8a8"/></linearGradient><linearGradient id="h237" x1="0" y1="0" x2="1" y2="0"><stop offset="0" stop-color="rgba(0,0,0,0)"/><stop offset="0.35" stop-color="rgba(0,0,0,0.3)"/><stop offset="1" stop-color="rgba(0,0,0,0.6)"/></linearGradient></defs><rect x="0" y="0" width="1671" height="1006" fill="#333333"/><rect x="0" y="0" width="1671" height="38" fill="#232323"/><rect x="0" y="37" width="2.2" height="969" fill="#525252"/><rect x="2.2" y="37" width="1" height="969" fill="#282828"/><path d="M2,37 V6 Q2,1 7,1 H112 Q117,1 117,6 V37 Z" fill="url(#v1)"/><path d="M2.2,37 V6 Q2.2,1.2 7,1.2 H112 Q116.8,1.2 116.8,6 V37" fill="none" stroke="#8e8e8e" stroke-width="1.3"/><line x1="76" y1="2" x2="76" y2="37" stroke="#777" stroke-width="1"/><circle cx="94.5" cy="21.5" r="12" fill="#363636"/><text x="89.5" y="26" font-size="14" fill="#9a9a9a">+</text><text x="10" y="25.5" font-size="14" fill="#ececec" textLength="58" lengthAdjust="spacingAndGlyphs">History 1</text><rect x="2.5" y="37" width="1668.5" height="2" fill="#262626"/><path d="M1056.6,37 V4 Q1056.6,1 1060.6,1 H1230 Q1235,1 1235,6 V37 Z" fill="url(#v2)"/><path d="M1056.6,37 V5 Q1056.6,1 1060.6,1 H1064.1 V37 Z" fill="#19d219"/><circle cx="1166" cy="18.5" r="12" fill="url(#v3)"/><path d="M1160,17 H1172 L1166,23.5 Z" fill="#fff"/><text x="1068" y="14.2" font-size="13" fill="#ececec" textLength="82" lengthAdjust="spacingAndGlyphs">X-Rite i1Pro 3</text><text x="1068" y="33" font-size="13" fill="#ececec" textLength="70" lengthAdjust="spacingAndGlyphs">Direct View</text><line x1="1190.3" y1="2" x2="1190.3" y2="37" stroke="#3a3a3a" stroke-width="1.2"/><circle cx="1216.4" cy="18.5" r="16" fill="#0000e6" stroke="#fff" stroke-width="1.2"/><text x="1216.4" y="23.5" font-size="13" fill="#fff" text-anchor="middle" font-weight="bold" textLength="21" lengthAdjust="spacingAndGlyphs">710</text><path d="M1243.4,37 V4 Q1243.4,1 1247.4,1 H1400 Q1405,1 1405,6 V37 Z" fill="url(#v4)"/><path d="M1243.4,37 V5 Q1243.4,1 1247.4,1 H1250.9 V37 Z" fill="#19d219"/><circle cx="1385.2" cy="18.5" r="12" fill="url(#v5)"/><path d="M1379.2,17 H1391.2 L1385.2,23.5 Z" fill="#fff"/><text x="1254.5" y="14.2" font-size="13" fill="#ececec" textLength="80" lengthAdjust="spacingAndGlyphs">Mobile Forge</text><path d="M1413.8,37 V4 Q1413.8,1 1417.8,1 H1586.9 Q1591.9,1 1591.9,6 V37 Z" fill="url(#v6)"/><path d="M1413.8,37 V5 Q1413.8,1 1417.8,1 H1421.3 V37 Z" fill="#e6e600"/><circle cx="1572" cy="18.5" r="12" fill="url(#v7)"/><path d="M1566,17 H1578 L1572,23.5 Z" fill="#fff"/><text x="1424" y="14.2" font-size="13" fill="#ececec" textLength="131" lengthAdjust="spacingAndGlyphs">Direct Display Control</text><rect x="1596.8" y="0.6" width="40.59999999999995" height="34.4" rx="5" fill="url(#v8)" stroke="#d8d8d8" stroke-width="1.2"/><rect x="1639.1" y="0.6" width="36.3" height="34.4" rx="5" fill="url(#v9)" stroke="#d8d8d8" stroke-width="1.2"/><circle cx="1616.8" cy="17.5" r="12" fill="url(#v10)"/><path d="M1622.31,16.03 L1624.59,16.16 L1624.59,18.84 L1622.31,18.97 L1621.73,20.36 L1623.25,22.06 L1621.36,23.95 L1619.66,22.43 L1618.27,23.01 L1618.14,25.29 L1615.46,25.29 L1615.33,23.01 L1613.94,22.43 L1612.24,23.95 L1610.35,22.06 L1611.87,20.36 L1611.29,18.97 L1609.01,18.84 L1609.01,16.16 L1611.29,16.03 L1611.87,14.64 L1610.35,12.94 L1612.24,11.05 L1613.94,12.57 L1615.33,11.99 L1615.46,9.71 L1618.14,9.71 L1618.27,11.99 L1619.66,12.57 L1621.36,11.05 L1623.25,12.94 L1621.73,14.64 Z M1620.6,17.5 A3.8,3.8 0 1 0 1613,17.5 A3.8,3.8 0 1 0 1620.6,17.5 Z" fill="#e4e4e4" fill-rule="evenodd"/><circle cx="1655.4" cy="17.5" r="12" fill="url(#v11)"/><path d="M1659,10.5 V23.5 L1652,16.5 Z" fill="#fff"/><text x="9.8" y="125" font-size="38" fill="#f2f2f2" textLength="334.5" lengthAdjust="spacingAndGlyphs">Saturation Sweeps</text><rect x="46" y="216" width="312" height="386.5" fill="#232323"/><text x="183.5" y="211" font-size="14" fill="#d4d4d4" text-anchor="middle" textLength="79" lengthAdjust="spacingAndGlyphs">DeltaE 2000</text><line x1="87.44" y1="216" x2="87.44" y2="602.5" stroke="#8c8c8c" stroke-width="1.5"/><line x1="128.88" y1="216" x2="128.88" y2="602.5" stroke="#8c8c8c" stroke-width="1.5"/><line x1="170.32" y1="216" x2="170.32" y2="602.5" stroke="#8c8c8c" stroke-width="1.5"/><line x1="211.76" y1="216" x2="211.76" y2="602.5" stroke="#8c8c8c" stroke-width="1.5"/><line x1="253.2" y1="216" x2="253.2" y2="602.5" stroke="#8c8c8c" stroke-width="1.5"/><line x1="294.64" y1="216" x2="294.64" y2="602.5" stroke="#8c8c8c" stroke-width="1.5"/><line x1="336.08" y1="216" x2="336.08" y2="602.5" stroke="#8c8c8c" stroke-width="1.5"/><rect x="46" y="216" width="312" height="386.5" fill="none" stroke="#9a9a9a" stroke-width="1.6"/><line x1="46" y1="602.5" x2="46" y2="608.5" stroke="#c8c8c8" stroke-width="1.6"/><text x="46" y="624" font-size="14" fill="#d4d4d4" text-anchor="middle">0</text><line x1="87.44" y1="602.5" x2="87.44" y2="608.5" stroke="#c8c8c8" stroke-width="1.6"/><text x="87.44" y="624" font-size="14" fill="#d4d4d4" text-anchor="middle">2</text><line x1="128.88" y1="602.5" x2="128.88" y2="608.5" stroke="#c8c8c8" stroke-width="1.6"/><text x="128.88" y="624" font-size="14" fill="#d4d4d4" text-anchor="middle">4</text><line x1="170.32" y1="602.5" x2="170.32" y2="608.5" stroke="#c8c8c8" stroke-width="1.6"/><text x="170.32" y="624" font-size="14" fill="#d4d4d4" text-anchor="middle">6</text><line x1="211.76" y1="602.5" x2="211.76" y2="608.5" stroke="#c8c8c8" stroke-width="1.6"/><text x="211.76" y="624" font-size="14" fill="#d4d4d4" text-anchor="middle">8</text><line x1="253.2" y1="602.5" x2="253.2" y2="608.5" stroke="#c8c8c8" stroke-width="1.6"/><text x="253.2" y="624" font-size="14" fill="#d4d4d4" text-anchor="middle">10</text><line x1="294.64" y1="602.5" x2="294.64" y2="608.5" stroke="#c8c8c8" stroke-width="1.6"/><text x="294.64" y="624" font-size="14" fill="#d4d4d4" text-anchor="middle">12</text><line x1="336.08" y1="602.5" x2="336.08" y2="608.5" stroke="#c8c8c8" stroke-width="1.6"/><text x="336.08" y="624" font-size="14" fill="#d4d4d4" text-anchor="middle">14</text><line x1="40" y1="216" x2="46" y2="216" stroke="#c8c8c8" stroke-width="1.6"/><line x1="40" y1="280.42" x2="46" y2="280.42" stroke="#c8c8c8" stroke-width="1.6"/><line x1="40" y1="344.83" x2="46" y2="344.83" stroke="#c8c8c8" stroke-width="1.6"/><line x1="40" y1="409.25" x2="46" y2="409.25" stroke="#c8c8c8" stroke-width="1.6"/><line x1="40" y1="473.67" x2="46" y2="473.67" stroke="#c8c8c8" stroke-width="1.6"/><line x1="40" y1="538.08" x2="46" y2="538.08" stroke="#c8c8c8" stroke-width="1.6"/><line x1="40" y1="602.5" x2="46" y2="602.5" stroke="#c8c8c8" stroke-width="1.6"/><text x="44.8" y="253.21" font-size="13.5" fill="#d4d4d4" text-anchor="end" textLength="36" lengthAdjust="spacingAndGlyphs">100%</text><text x="44.8" y="317.62" font-size="13.5" fill="#d4d4d4" text-anchor="end" textLength="28" lengthAdjust="spacingAndGlyphs">80%</text><text x="44.8" y="382.04" font-size="13.5" fill="#d4d4d4" text-anchor="end" textLength="28" lengthAdjust="spacingAndGlyphs">60%</text><text x="44.8" y="446.46" font-size="13.5" fill="#d4d4d4" text-anchor="end" textLength="28" lengthAdjust="spacingAndGlyphs">40%</text><text x="44.8" y="510.88" font-size="13.5" fill="#d4d4d4" text-anchor="end" textLength="28" lengthAdjust="spacingAndGlyphs">20%</text><text x="45.5" y="577.29" font-size="13.5" fill="#d4d4d4" text-anchor="end" textLength="24.5" lengthAdjust="spacingAndGlyphs">100</text><rect x="47" y="222" width="48.5" height="5.9" fill="url(#h12)" stroke="#000" stroke-width="1.1"/><rect x="47" y="229" width="5.5" height="5.9" fill="url(#h13)" stroke="#000" stroke-width="1.1"/><rect x="47" y="236" width="18.4" height="5.9" fill="url(#h14)" stroke="#000" stroke-width="1.1"/><rect x="47" y="243" width="19.5" height="5.9" fill="url(#h15)" stroke="#000" stroke-width="1.1"/><rect x="47" y="250" width="4.6" height="5.9" fill="url(#h16)" stroke="#000" stroke-width="1.1"/><rect x="47" y="257" width="5.9" height="5.9" fill="url(#h17)" stroke="#000" stroke-width="1.1"/><rect x="47" y="286.42" width="33.5" height="5.9" fill="url(#h18)" stroke="#000" stroke-width="1.1"/><rect x="47" y="293.42" width="5.5" height="5.9" fill="url(#h19)" stroke="#000" stroke-width="1.1"/><rect x="47" y="300.42" width="24.3" height="5.9" fill="url(#h20)" stroke="#000" stroke-width="1.1"/><rect x="47" y="307.42" width="20.2" height="5.9" fill="url(#h21)" stroke="#000" stroke-width="1.1"/><rect x="47" y="314.42" width="4.6" height="5.9" fill="url(#h22)" stroke="#000" stroke-width="1.1"/><rect x="47" y="321.42" width="4.6" height="5.9" fill="url(#h23)" stroke="#000" stroke-width="1.1"/><rect x="47" y="350.83" width="22" height="5.9" fill="url(#h24)" stroke="#000" stroke-width="1.1"/><rect x="47" y="357.83" width="4.6" height="5.9" fill="url(#h25)" stroke="#000" stroke-width="1.1"/><rect x="47" y="364.83" width="13.8" height="5.9" fill="url(#h26)" stroke="#000" stroke-width="1.1"/><rect x="47" y="371.83" width="22" height="5.9" fill="url(#h27)" stroke="#000" stroke-width="1.1"/><rect x="47" y="378.83" width="7.3" height="5.9" fill="url(#h28)" stroke="#000" stroke-width="1.1"/><rect x="47" y="385.83" width="8.7" height="5.9" fill="url(#h29)" stroke="#000" stroke-width="1.1"/><rect x="47" y="415.25" width="13.8" height="5.9" fill="url(#h30)" stroke="#000" stroke-width="1.1"/><rect x="47" y="422.25" width="4.6" height="5.9" fill="url(#h31)" stroke="#000" stroke-width="1.1"/><rect x="47" y="429.25" width="7.3" height="5.9" fill="url(#h32)" stroke="#000" stroke-width="1.1"/><rect x="47" y="436.25" width="27" height="5.9" fill="url(#h33)" stroke="#000" stroke-width="1.1"/><rect x="47" y="443.25" width="11.4" height="5.9" fill="url(#h34)" stroke="#000" stroke-width="1.1"/><rect x="47" y="450.25" width="10" height="5.9" fill="url(#h35)" stroke="#000" stroke-width="1.1"/><rect x="47" y="479.67" width="16" height="5.9" fill="url(#h36)" stroke="#000" stroke-width="1.1"/><rect x="47" y="486.67" width="11.4" height="5.9" fill="url(#h37)" stroke="#000" stroke-width="1.1"/><rect x="47" y="493.67" width="24.3" height="5.9" fill="url(#h38)" stroke="#000" stroke-width="1.1"/><rect x="47" y="500.67" width="33" height="5.9" fill="url(#h39)" stroke="#000" stroke-width="1.1"/><rect x="47" y="507.67" width="18.8" height="5.9" fill="url(#h40)" stroke="#000" stroke-width="1.1"/><rect x="47" y="514.67" width="19.3" height="5.9" fill="url(#h41)" stroke="#000" stroke-width="1.1"/><rect x="47" y="584.8" width="46.3" height="5.9" fill="url(#h42)" stroke="#000" stroke-width="1.1"/><rect x="410.6" y="162.7" width="144.3" height="281.5" fill="#232323"/><text x="469.55" y="157.6" font-size="14" fill="#d4d4d4" text-anchor="middle" textLength="45" lengthAdjust="spacingAndGlyphs">Delta L</text><line x1="410.6" y1="209.5" x2="554.9" y2="209.5" stroke="#9a9a9a" stroke-width="1.6"/><line x1="410.6" y1="256.9" x2="554.9" y2="256.9" stroke="#9a9a9a" stroke-width="1.6"/><line x1="410.6" y1="304.2" x2="554.9" y2="304.2" stroke="#9a9a9a" stroke-width="1.6"/><line x1="410.6" y1="351.4" x2="554.9" y2="351.4" stroke="#9a9a9a" stroke-width="1.6"/><line x1="410.6" y1="398.5" x2="554.9" y2="398.5" stroke="#9a9a9a" stroke-width="1.6"/><rect x="410.6" y="162.7" width="144.3" height="281.5" fill="none" stroke="#9a9a9a" stroke-width="1.6"/><line x1="405.1" y1="162.7" x2="410.6" y2="162.7" stroke="#c8c8c8" stroke-width="1.4"/><text x="404.6" y="168.1" font-size="14" fill="#d4d4d4" text-anchor="end">15</text><line x1="405.1" y1="209.5" x2="410.6" y2="209.5" stroke="#c8c8c8" stroke-width="1.4"/><text x="404.6" y="214.9" font-size="14" fill="#d4d4d4" text-anchor="end">10</text><line x1="405.1" y1="256.9" x2="410.6" y2="256.9" stroke="#c8c8c8" stroke-width="1.4"/><text x="404.6" y="262.3" font-size="14" fill="#d4d4d4" text-anchor="end">5</text><line x1="405.1" y1="304.2" x2="410.6" y2="304.2" stroke="#c8c8c8" stroke-width="1.4"/><text x="404.6" y="309.6" font-size="14" fill="#d4d4d4" text-anchor="end">0</text><line x1="405.1" y1="351.4" x2="410.6" y2="351.4" stroke="#c8c8c8" stroke-width="1.4"/><text x="404.6" y="356.8" font-size="14" fill="#d4d4d4" text-anchor="end">-5</text><line x1="405.1" y1="398.5" x2="410.6" y2="398.5" stroke="#c8c8c8" stroke-width="1.4"/><text x="404.6" y="403.9" font-size="14" fill="#d4d4d4" text-anchor="end">-10</text><line x1="405.1" y1="444.2" x2="410.6" y2="444.2" stroke="#c8c8c8" stroke-width="1.4"/><text x="404.6" y="451" font-size="14" fill="#d4d4d4" text-anchor="end">-15</text><line x1="410.6" y1="444.2" x2="410.6" y2="449.7" stroke="#c8c8c8" stroke-width="1.6"/><line x1="554.9" y1="444.2" x2="554.9" y2="449.7" stroke="#c8c8c8" stroke-width="1.6"/><text x="482.75" y="461.3" font-size="14" fill="#d4d4d4" text-anchor="middle" textLength="35" lengthAdjust="spacingAndGlyphs">100%</text><line x1="425.1" y1="302.6" x2="540.4" y2="302.6" stroke="#000" stroke-width="1.2"/><rect x="607.7" y="162.7" width="144.7" height="281.5" fill="#232323"/><text x="666.85" y="157.6" font-size="14" fill="#d4d4d4" text-anchor="middle" textLength="45" lengthAdjust="spacingAndGlyphs">Delta C</text><line x1="607.7" y1="209.5" x2="752.4" y2="209.5" stroke="#9a9a9a" stroke-width="1.6"/><line x1="607.7" y1="256.9" x2="752.4" y2="256.9" stroke="#9a9a9a" stroke-width="1.6"/><line x1="607.7" y1="304.2" x2="752.4" y2="304.2" stroke="#9a9a9a" stroke-width="1.6"/><line x1="607.7" y1="351.4" x2="752.4" y2="351.4" stroke="#9a9a9a" stroke-width="1.6"/><line x1="607.7" y1="398.5" x2="752.4" y2="398.5" stroke="#9a9a9a" stroke-width="1.6"/><rect x="607.7" y="162.7" width="144.7" height="281.5" fill="none" stroke="#9a9a9a" stroke-width="1.6"/><line x1="602.2" y1="162.7" x2="607.7" y2="162.7" stroke="#c8c8c8" stroke-width="1.4"/><text x="601.7" y="168.1" font-size="14" fill="#d4d4d4" text-anchor="end">15</text><line x1="602.2" y1="209.5" x2="607.7" y2="209.5" stroke="#c8c8c8" stroke-width="1.4"/><text x="601.7" y="214.9" font-size="14" fill="#d4d4d4" text-anchor="end">10</text><line x1="602.2" y1="256.9" x2="607.7" y2="256.9" stroke="#c8c8c8" stroke-width="1.4"/><text x="601.7" y="262.3" font-size="14" fill="#d4d4d4" text-anchor="end">5</text><line x1="602.2" y1="304.2" x2="607.7" y2="304.2" stroke="#c8c8c8" stroke-width="1.4"/><text x="601.7" y="309.6" font-size="14" fill="#d4d4d4" text-anchor="end">0</text><line x1="602.2" y1="351.4" x2="607.7" y2="351.4" stroke="#c8c8c8" stroke-width="1.4"/><text x="601.7" y="356.8" font-size="14" fill="#d4d4d4" text-anchor="end">-5</text><line x1="602.2" y1="398.5" x2="607.7" y2="398.5" stroke="#c8c8c8" stroke-width="1.4"/><text x="601.7" y="403.9" font-size="14" fill="#d4d4d4" text-anchor="end">-10</text><line x1="602.2" y1="444.2" x2="607.7" y2="444.2" stroke="#c8c8c8" stroke-width="1.4"/><text x="601.7" y="451" font-size="14" fill="#d4d4d4" text-anchor="end">-15</text><line x1="607.7" y1="444.2" x2="607.7" y2="449.7" stroke="#c8c8c8" stroke-width="1.6"/><line x1="752.4" y1="444.2" x2="752.4" y2="449.7" stroke="#c8c8c8" stroke-width="1.6"/><text x="680.05" y="461.3" font-size="14" fill="#d4d4d4" text-anchor="middle" textLength="35" lengthAdjust="spacingAndGlyphs">100%</text><rect x="622.7" y="288.7" width="114.7" height="14.2" fill="url(#v43)" stroke="#000" stroke-width="1.5"/><rect x="805.5" y="162.7" width="144.4" height="281.5" fill="#232323"/><text x="864.5" y="157.6" font-size="14" fill="#d4d4d4" text-anchor="middle" textLength="45" lengthAdjust="spacingAndGlyphs">Delta H</text><line x1="805.5" y1="209.5" x2="949.9" y2="209.5" stroke="#9a9a9a" stroke-width="1.6"/><line x1="805.5" y1="256.9" x2="949.9" y2="256.9" stroke="#9a9a9a" stroke-width="1.6"/><line x1="805.5" y1="304.2" x2="949.9" y2="304.2" stroke="#9a9a9a" stroke-width="1.6"/><line x1="805.5" y1="351.4" x2="949.9" y2="351.4" stroke="#9a9a9a" stroke-width="1.6"/><line x1="805.5" y1="398.5" x2="949.9" y2="398.5" stroke="#9a9a9a" stroke-width="1.6"/><rect x="805.5" y="162.7" width="144.4" height="281.5" fill="none" stroke="#9a9a9a" stroke-width="1.6"/><line x1="800" y1="162.7" x2="805.5" y2="162.7" stroke="#c8c8c8" stroke-width="1.4"/><text x="799.5" y="168.1" font-size="14" fill="#d4d4d4" text-anchor="end">15</text><line x1="800" y1="209.5" x2="805.5" y2="209.5" stroke="#c8c8c8" stroke-width="1.4"/><text x="799.5" y="214.9" font-size="14" fill="#d4d4d4" text-anchor="end">10</text><line x1="800" y1="256.9" x2="805.5" y2="256.9" stroke="#c8c8c8" stroke-width="1.4"/><text x="799.5" y="262.3" font-size="14" fill="#d4d4d4" text-anchor="end">5</text><line x1="800" y1="304.2" x2="805.5" y2="304.2" stroke="#c8c8c8" stroke-width="1.4"/><text x="799.5" y="309.6" font-size="14" fill="#d4d4d4" text-anchor="end">0</text><line x1="800" y1="351.4" x2="805.5" y2="351.4" stroke="#c8c8c8" stroke-width="1.4"/><text x="799.5" y="356.8" font-size="14" fill="#d4d4d4" text-anchor="end">-5</text><line x1="800" y1="398.5" x2="805.5" y2="398.5" stroke="#c8c8c8" stroke-width="1.4"/><text x="799.5" y="403.9" font-size="14" fill="#d4d4d4" text-anchor="end">-10</text><line x1="800" y1="444.2" x2="805.5" y2="444.2" stroke="#c8c8c8" stroke-width="1.4"/><text x="799.5" y="451" font-size="14" fill="#d4d4d4" text-anchor="end">-15</text><line x1="805.5" y1="444.2" x2="805.5" y2="449.7" stroke="#c8c8c8" stroke-width="1.6"/><line x1="949.9" y1="444.2" x2="949.9" y2="449.7" stroke="#c8c8c8" stroke-width="1.6"/><text x="877.7" y="461.3" font-size="14" fill="#d4d4d4" text-anchor="middle" textLength="35" lengthAdjust="spacingAndGlyphs">100%</text><line x1="820" y1="302.6" x2="935.4" y2="302.6" stroke="#000" stroke-width="1.2"/><rect x="378" y="470.7" width="592" height="162.9" fill="#000"/><rect x="399.2" y="478.6" width="97.6" height="130.1" fill="#c0c2a3" stroke="#f4f4f4" stroke-width="1.4"/><text x="448" y="624.6" font-size="12.5" fill="#f4f4f4" text-anchor="middle">20%</text><rect x="515.3" y="478.6" width="97.6" height="130.1" fill="#c2c088" stroke="#f4f4f4" stroke-width="1.4"/><text x="564.1" y="624.6" font-size="12.5" fill="#f4f4f4" text-anchor="middle">40%</text><rect x="631" y="478.6" width="97.6" height="130.1" fill="#c3c16e" stroke="#f4f4f4" stroke-width="1.4"/><text x="679.8" y="624.6" font-size="12.5" fill="#f4f4f4" text-anchor="middle">60%</text><rect x="746.4" y="478.6" width="97.6" height="130.1" fill="#c2c04d" stroke="#f4f4f4" stroke-width="1.4"/><text x="795.2" y="624.6" font-size="12.5" fill="#f4f4f4" text-anchor="middle">80%</text><rect x="862.1" y="478.6" width="97.6" height="130.1" fill="#c3c000" stroke="#f4f4f4" stroke-width="1.4"/><text x="910.9" y="624.6" font-size="12.5" fill="#f4f4f4" text-anchor="middle">100%</text><text transform="translate(391,506.5) rotate(-90)" font-size="12.5" fill="#f4f4f4" text-anchor="middle">Actual</text><text transform="translate(391,580.8) rotate(-90)" font-size="12.5" fill="#f4f4f4" text-anchor="middle">Target</text><text x="53.2" y="678.5" font-size="28" fill="#f0f0f0" textLength="232.6" lengthAdjust="spacingAndGlyphs">Avg dE2000: 0,89</text><text x="57" y="719.7" font-size="28" fill="#f0f0f0" textLength="225.5" lengthAdjust="spacingAndGlyphs">Max dE2000: 2,4</text><text x="17" y="767.7" font-size="25.5" fill="#f0f0f0" textLength="220" lengthAdjust="spacingAndGlyphs">Current Reading</text><text x="17.5" y="802.9" font-size="23.5" fill="#f0f0f0" textLength="102.5" lengthAdjust="spacingAndGlyphs">x: 0,4202</text><text x="175" y="802.9" font-size="23.5" fill="#f0f0f0" textLength="102" lengthAdjust="spacingAndGlyphs">y: 0,5081</text><text x="18" y="843.6" font-size="23.5" fill="#f0f0f0" textLength="96" lengthAdjust="spacingAndGlyphs">fL: 85,74</text><text x="17.5" y="877.7" font-size="23.5" fill="#f0f0f0" textLength="160" lengthAdjust="spacingAndGlyphs">cd/m²: 293,78</text><rect x="359.8" y="685.8" width="249.2" height="180.4" fill="#232323"/><text x="469" y="680.9" font-size="13.5" fill="#d4d4d4" text-anchor="middle" textLength="82" lengthAdjust="spacingAndGlyphs">RGB Balance</text><line x1="359.8" y1="705.3" x2="609" y2="705.3" stroke="#9a9a9a" stroke-width="1.6"/><line x1="353.8" y1="705.3" x2="359.8" y2="705.3" stroke="#c8c8c8" stroke-width="1.4"/><text x="353" y="710.3" font-size="13.5" fill="#d4d4d4" text-anchor="end" textLength="23.5" lengthAdjust="spacingAndGlyphs">104</text><line x1="359.8" y1="741.2" x2="609" y2="741.2" stroke="#9a9a9a" stroke-width="1.6"/><line x1="353.8" y1="741.2" x2="359.8" y2="741.2" stroke="#c8c8c8" stroke-width="1.4"/><text x="353" y="746.2" font-size="13.5" fill="#d4d4d4" text-anchor="end" textLength="23.5" lengthAdjust="spacingAndGlyphs">102</text><line x1="359.8" y1="777.1" x2="609" y2="777.1" stroke="#9a9a9a" stroke-width="1.6"/><line x1="353.8" y1="777.1" x2="359.8" y2="777.1" stroke="#c8c8c8" stroke-width="1.4"/><text x="353" y="782.1" font-size="13.5" fill="#d4d4d4" text-anchor="end" textLength="23.5" lengthAdjust="spacingAndGlyphs">100</text><line x1="359.8" y1="813" x2="609" y2="813" stroke="#9a9a9a" stroke-width="1.6"/><line x1="353.8" y1="813" x2="359.8" y2="813" stroke="#c8c8c8" stroke-width="1.4"/><text x="353" y="818" font-size="13.5" fill="#d4d4d4" text-anchor="end" textLength="23.5" lengthAdjust="spacingAndGlyphs">98</text><line x1="359.8" y1="848.9" x2="609" y2="848.9" stroke="#9a9a9a" stroke-width="1.6"/><line x1="353.8" y1="848.9" x2="359.8" y2="848.9" stroke="#c8c8c8" stroke-width="1.4"/><text x="353" y="853.9" font-size="13.5" fill="#d4d4d4" text-anchor="end" textLength="23.5" lengthAdjust="spacingAndGlyphs">96</text><rect x="359.8" y="685.8" width="249.2" height="180.4" fill="none" stroke="#9a9a9a" stroke-width="1.6"/><line x1="359.8" y1="866.2" x2="359.8" y2="871.2" stroke="#c8c8c8" stroke-width="1.6"/><line x1="609" y1="866.2" x2="609" y2="871.2" stroke="#c8c8c8" stroke-width="1.6"/><rect x="383.9" y="778.7" width="65.6" height="87.5" fill="url(#v44)" stroke="#000" stroke-width="1.4"/><rect x="450.6" y="774.6" width="65.2" height="91.6" fill="url(#v45)" stroke="#000" stroke-width="1.4"/><rect x="517.3" y="847" width="65.3" height="19.2" fill="url(#v46)" stroke="#000" stroke-width="1.2"/><line x1="359.8" y1="866.2" x2="609" y2="866.2" stroke="#9a9a9a" stroke-width="1.6"/><text x="484.5" y="883" font-size="13.5" fill="#d4d4d4" text-anchor="middle" textLength="35" lengthAdjust="spacingAndGlyphs">100%</text><rect x="630.2" y="654.2" width="729.8" height="235.8" fill="#000"/><rect x="632" y="656" width="725.8" height="14" fill="#2e2e2e"/><rect x="632" y="670" width="725.8" height="13.5" fill="#121212"/><rect x="632" y="683.5" width="725.8" height="25.8" fill="#404040"/><text x="649.5" y="703.1" font-size="15" fill="#f2f2f2" font-weight="bold" textLength="85.7" lengthAdjust="spacingAndGlyphs">x: CIE31</text><text x="832.4" y="703.1" font-size="15" fill="#f2f2f2" textLength="67.3" lengthAdjust="spacingAndGlyphs">0,3345</text><text x="938.4" y="703.1" font-size="15" fill="#f2f2f2" textLength="67.3" lengthAdjust="spacingAndGlyphs">0,3569</text><text x="1044.9" y="703.1" font-size="15" fill="#f2f2f2" textLength="67.3" lengthAdjust="spacingAndGlyphs">0,3777</text><text x="1151.4" y="703.1" font-size="15" fill="#f2f2f2" textLength="67.3" lengthAdjust="spacingAndGlyphs">0,3975</text><text x="1257.9" y="703.1" font-size="15" fill="#f2f2f2" textLength="67.3" lengthAdjust="spacingAndGlyphs">0,4202</text><rect x="632" y="709.3" width="725.8" height="25.8" fill="#7e7e7e"/><text x="649.5" y="728.9" font-size="15" fill="#f2f2f2" font-weight="bold" textLength="85.7" lengthAdjust="spacingAndGlyphs">y: CIE31</text><text x="832.4" y="728.9" font-size="15" fill="#f2f2f2" textLength="67.3" lengthAdjust="spacingAndGlyphs">0,3675</text><text x="938.4" y="728.9" font-size="15" fill="#f2f2f2" textLength="67.3" lengthAdjust="spacingAndGlyphs">0,4040</text><text x="1044.9" y="728.9" font-size="15" fill="#f2f2f2" textLength="67.3" lengthAdjust="spacingAndGlyphs">0,4386</text><text x="1151.4" y="728.9" font-size="15" fill="#f2f2f2" textLength="67.3" lengthAdjust="spacingAndGlyphs">0,4705</text><text x="1257.9" y="728.9" font-size="15" fill="#f2f2f2" textLength="67.3" lengthAdjust="spacingAndGlyphs">0,5081</text><rect x="632" y="735.1" width="725.8" height="25.8" fill="#404040"/><text x="649.5" y="754.7" font-size="15" fill="#f2f2f2" font-weight="bold" textLength="13" lengthAdjust="spacingAndGlyphs">Y</text><text x="832.4" y="754.7" font-size="15" fill="#f2f2f2" textLength="92.6" lengthAdjust="spacingAndGlyphs">310,1662</text><text x="938.4" y="754.7" font-size="15" fill="#f2f2f2" textLength="92.6" lengthAdjust="spacingAndGlyphs">303,9280</text><text x="1044.9" y="754.7" font-size="15" fill="#f2f2f2" textLength="92.6" lengthAdjust="spacingAndGlyphs">300,8771</text><text x="1151.4" y="754.7" font-size="15" fill="#f2f2f2" textLength="92.6" lengthAdjust="spacingAndGlyphs">297,1016</text><text x="1257.9" y="754.7" font-size="15" fill="#f2f2f2" textLength="92.6" lengthAdjust="spacingAndGlyphs">293,7768</text><rect x="632" y="760.9" width="725.8" height="25.8" fill="#7e7e7e"/><text x="649.5" y="780.5" font-size="15" fill="#f2f2f2" font-weight="bold" textLength="159" lengthAdjust="spacingAndGlyphs">Target x:CIE31</text><text x="832.4" y="780.5" font-size="15" fill="#f2f2f2" textLength="67.3" lengthAdjust="spacingAndGlyphs">0,3344</text><text x="938.4" y="780.5" font-size="15" fill="#f2f2f2" textLength="67.3" lengthAdjust="spacingAndGlyphs">0,3564</text><text x="1044.9" y="780.5" font-size="15" fill="#f2f2f2" textLength="67.3" lengthAdjust="spacingAndGlyphs">0,3773</text><text x="1151.4" y="780.5" font-size="15" fill="#f2f2f2" textLength="67.3" lengthAdjust="spacingAndGlyphs">0,3969</text><text x="1257.9" y="780.5" font-size="15" fill="#f2f2f2" textLength="67.3" lengthAdjust="spacingAndGlyphs">0,4193</text><rect x="632" y="786.7" width="725.8" height="25.8" fill="#404040"/><text x="649.5" y="806.3" font-size="15" fill="#f2f2f2" font-weight="bold" textLength="159" lengthAdjust="spacingAndGlyphs">Target y:CIE31</text><text x="832.4" y="806.3" font-size="15" fill="#f2f2f2" textLength="67.3" lengthAdjust="spacingAndGlyphs">0,3648</text><text x="938.4" y="806.3" font-size="15" fill="#f2f2f2" textLength="67.3" lengthAdjust="spacingAndGlyphs">0,4013</text><text x="1044.9" y="806.3" font-size="15" fill="#f2f2f2" textLength="67.3" lengthAdjust="spacingAndGlyphs">0,4358</text><text x="1151.4" y="806.3" font-size="15" fill="#f2f2f2" textLength="67.3" lengthAdjust="spacingAndGlyphs">0,4682</text><text x="1257.9" y="806.3" font-size="15" fill="#f2f2f2" textLength="67.3" lengthAdjust="spacingAndGlyphs">0,5053</text><rect x="632" y="812.5" width="725.8" height="25.8" fill="#7e7e7e"/><text x="649.5" y="832.1" font-size="15" fill="#f2f2f2" font-weight="bold" textLength="112" lengthAdjust="spacingAndGlyphs">Target Y</text><text x="832.4" y="832.1" font-size="15" fill="#f2f2f2" textLength="92.6" lengthAdjust="spacingAndGlyphs">308,8767</text><text x="938.4" y="832.1" font-size="15" fill="#f2f2f2" textLength="92.6" lengthAdjust="spacingAndGlyphs">303,4550</text><text x="1044.9" y="832.1" font-size="15" fill="#f2f2f2" textLength="92.6" lengthAdjust="spacingAndGlyphs">299,2892</text><text x="1151.4" y="832.1" font-size="15" fill="#f2f2f2" textLength="92.6" lengthAdjust="spacingAndGlyphs">296,0199</text><text x="1257.9" y="832.1" font-size="15" fill="#f2f2f2" textLength="92.6" lengthAdjust="spacingAndGlyphs">292,8592</text><rect x="632" y="838.3" width="725.8" height="25.8" fill="#404040"/><text x="649.5" y="857.9" font-size="15" fill="#f2f2f2" font-weight="bold" textLength="90" lengthAdjust="spacingAndGlyphs">ΔE 2000</text><text x="832.4" y="857.9" font-size="15" fill="#f2f2f2" textLength="67.3" lengthAdjust="spacingAndGlyphs">0,9855</text><text x="938.4" y="857.9" font-size="15" fill="#f2f2f2" textLength="67.3" lengthAdjust="spacingAndGlyphs">0,5549</text><text x="1044.9" y="857.9" font-size="15" fill="#f2f2f2" textLength="67.3" lengthAdjust="spacingAndGlyphs">0,4791</text><text x="1151.4" y="857.9" font-size="15" fill="#f2f2f2" textLength="67.3" lengthAdjust="spacingAndGlyphs">0,3208</text><text x="1257.9" y="857.9" font-size="15" fill="#f2f2f2" textLength="67.3" lengthAdjust="spacingAndGlyphs">0,3766</text><rect x="632" y="864.1" width="725.8" height="25.8" fill="#7e7e7e"/><text x="649.5" y="883.7" font-size="15" fill="#f2f2f2" font-weight="bold" textLength="72" lengthAdjust="spacingAndGlyphs">ΔE ITP</text><text x="832.4" y="883.7" font-size="15" fill="#f2f2f2" textLength="67.3" lengthAdjust="spacingAndGlyphs">1,2356</text><text x="938.4" y="883.7" font-size="15" fill="#f2f2f2" textLength="67.3" lengthAdjust="spacingAndGlyphs">1,2354</text><text x="1044.9" y="883.7" font-size="15" fill="#f2f2f2" textLength="67.3" lengthAdjust="spacingAndGlyphs">1,4104</text><text x="1151.4" y="883.7" font-size="15" fill="#f2f2f2" textLength="67.3" lengthAdjust="spacingAndGlyphs">1,3433</text><text x="1257.9" y="883.7" font-size="15" fill="#f2f2f2" textLength="67.3" lengthAdjust="spacingAndGlyphs">2,1078</text><text x="879" y="675" font-size="15" fill="#f2f2f2" text-anchor="middle" font-weight="bold" textLength="40" lengthAdjust="spacingAndGlyphs">20%</text><text x="985" y="675" font-size="15" fill="#f2f2f2" text-anchor="middle" font-weight="bold" textLength="40" lengthAdjust="spacingAndGlyphs">40%</text><text x="1091.5" y="675" font-size="15" fill="#f2f2f2" text-anchor="middle" font-weight="bold" textLength="40" lengthAdjust="spacingAndGlyphs">60%</text><text x="1198" y="675" font-size="15" fill="#f2f2f2" text-anchor="middle" font-weight="bold" textLength="40" lengthAdjust="spacingAndGlyphs">80%</text><text x="1304.5" y="675" font-size="15" fill="#f2f2f2" text-anchor="middle" font-weight="bold" textLength="51" lengthAdjust="spacingAndGlyphs">100%</text><rect x="976.4" y="89" width="694.6" height="558" fill="#1c1c1c"/><rect x="983" y="95.5" width="681.2" height="546" fill="#333333"/><text x="1323" y="114.2" font-size="14" fill="#d4d4d4" text-anchor="middle" textLength="84" lengthAdjust="spacingAndGlyphs">CIE 1976 u'v'</text><rect x="1020.8" y="119.8" width="639.7" height="491.4" fill="#232323"/><g clip-path="url(#cPlot)"><g transform="matrix(1066.0,0,0,-818.5,1020.8,611.2)"><g clip-path="url(#cLocus)"><path d="M0.45070,0.52289 L2.04750,-0.68137 L4.13213,2.08720 L0.69217,2.50826 Z" fill="#990000"/><path d="M0.12500,0.56250 L0.36646,2.54787 L-2.70766,3.38669 L-1.85964,0.31509 Z" fill="#009900"/><path d="M0.17544,0.15789 L-1.80920,-0.08951 L-0.85702,-3.70656 L1.77224,-1.04636 Z" fill="#000099"/><path d="M0.45419,0.51843 L0.12055,0.55901 L0.36249,2.54835 L0.69614,2.50777 Z" fill="url(#e47)"/><path d="M0.12847,0.56696 L0.17990,0.15442 L-1.80870,-0.09348 L-1.86013,0.31906 Z" fill="url(#e48)"/><path d="M0.16984,0.15711 L0.44992,0.52849 L2.04991,-0.67817 L1.76983,-1.04955 Z" fill="url(#e49)"/><g clip-path="url(#cTri)"><rect x="0.17373" y="0.15753" width="0.00496" height="0.00318" fill="url(#s50)"/><rect x="0.17342" y="0.15997" width="0.00711" height="0.00318" fill="url(#s51)"/><rect x="0.17312" y="0.16242" width="0.00926" height="0.00318" fill="url(#s52)"/><rect x="0.17281" y="0.16486" width="0.01140" height="0.00318" fill="url(#s53)"/><rect x="0.17251" y="0.16730" width="0.01355" height="0.00318" fill="url(#s54)"/><rect x="0.17220" y="0.16975" width="0.01570" height="0.00318" fill="url(#s55)"/><rect x="0.17190" y="0.17219" width="0.01785" height="0.00318" fill="url(#s56)"/><rect x="0.17159" y="0.17463" width="0.01999" height="0.00318" fill="url(#s57)"/><rect x="0.17129" y="0.17708" width="0.02214" height="0.00318" fill="url(#s58)"/><rect x="0.17099" y="0.17952" width="0.02429" height="0.00318" fill="url(#s59)"/><rect x="0.17068" y="0.18196" width="0.02644" height="0.00318" fill="url(#s60)"/><rect x="0.17038" y="0.18441" width="0.02858" height="0.00318" fill="url(#s61)"/><rect x="0.17007" y="0.18685" width="0.03073" height="0.00318" fill="url(#s62)"/><rect x="0.16977" y="0.18929" width="0.03288" height="0.00318" fill="url(#s63)"/><rect x="0.16946" y="0.19174" width="0.03503" height="0.00318" fill="url(#s64)"/><rect x="0.16916" y="0.19418" width="0.03717" height="0.00318" fill="url(#s65)"/><rect x="0.16885" y="0.19662" width="0.03932" height="0.00318" fill="url(#s66)"/><rect x="0.16855" y="0.19907" width="0.04147" height="0.00318" fill="url(#s67)"/><rect x="0.16824" y="0.20151" width="0.04362" height="0.00318" fill="url(#s68)"/><rect x="0.16794" y="0.20395" width="0.04576" height="0.00318" fill="url(#s69)"/><rect x="0.16763" y="0.20640" width="0.04791" height="0.00318" fill="url(#s70)"/><rect x="0.16733" y="0.20884" width="0.05006" height="0.00318" fill="url(#s71)"/><rect x="0.16703" y="0.21129" width="0.05220" height="0.00318" fill="url(#s72)"/><rect x="0.16672" y="0.21373" width="0.05435" height="0.00318" fill="url(#s73)"/><rect x="0.16642" y="0.21617" width="0.05650" height="0.00318" fill="url(#s74)"/><rect x="0.16611" y="0.21862" width="0.05865" height="0.00318" fill="url(#s75)"/><rect x="0.16581" y="0.22106" width="0.06079" height="0.00318" fill="url(#s76)"/><rect x="0.16550" y="0.22350" width="0.06294" height="0.00318" fill="url(#s77)"/><rect x="0.16520" y="0.22595" width="0.06509" height="0.00318" fill="url(#s78)"/><rect x="0.16489" y="0.22839" width="0.06724" height="0.00318" fill="url(#s79)"/><rect x="0.16459" y="0.23083" width="0.06938" height="0.00318" fill="url(#s80)"/><rect x="0.16428" y="0.23328" width="0.07153" height="0.00318" fill="url(#s81)"/><rect x="0.16398" y="0.23572" width="0.07368" height="0.00318" fill="url(#s82)"/><rect x="0.16367" y="0.23816" width="0.07583" height="0.00318" fill="url(#s83)"/><rect x="0.16337" y="0.24061" width="0.07797" height="0.00318" fill="url(#s84)"/><rect x="0.16307" y="0.24305" width="0.08012" height="0.00318" fill="url(#s85)"/><rect x="0.16276" y="0.24549" width="0.08227" height="0.00318" fill="url(#s86)"/><rect x="0.16246" y="0.24794" width="0.08442" height="0.00318" fill="url(#s87)"/><rect x="0.16215" y="0.25038" width="0.08656" height="0.00318" fill="url(#s88)"/><rect x="0.16185" y="0.25282" width="0.08871" height="0.00318" fill="url(#s89)"/><rect x="0.16154" y="0.25527" width="0.09086" height="0.00318" fill="url(#s90)"/><rect x="0.16124" y="0.25771" width="0.09301" height="0.00318" fill="url(#s91)"/><rect x="0.16093" y="0.26015" width="0.09515" height="0.00318" fill="url(#s92)"/><rect x="0.16063" y="0.26260" width="0.09730" height="0.00318" fill="url(#s93)"/><rect x="0.16032" y="0.26504" width="0.09945" height="0.00318" fill="url(#s94)"/><rect x="0.16002" y="0.26749" width="0.10160" height="0.00318" fill="url(#s95)"/><rect x="0.15971" y="0.26993" width="0.10374" height="0.00318" fill="url(#s96)"/><rect x="0.15941" y="0.27237" width="0.10589" height="0.00318" fill="url(#s97)"/><rect x="0.15911" y="0.27482" width="0.10804" height="0.00318" fill="url(#s98)"/><rect x="0.15880" y="0.27726" width="0.11018" height="0.00318" fill="url(#s99)"/><rect x="0.15850" y="0.27970" width="0.11233" height="0.00318" fill="url(#s100)"/><rect x="0.15819" y="0.28215" width="0.11448" height="0.00318" fill="url(#s101)"/><rect x="0.15789" y="0.28459" width="0.11663" height="0.00318" fill="url(#s102)"/><rect x="0.15758" y="0.28703" width="0.11877" height="0.00318" fill="url(#s103)"/><rect x="0.15728" y="0.28948" width="0.12092" height="0.00318" fill="url(#s104)"/><rect x="0.15697" y="0.29192" width="0.12307" height="0.00318" fill="url(#s105)"/><rect x="0.15667" y="0.29436" width="0.12522" height="0.00318" fill="url(#s106)"/><rect x="0.15636" y="0.29681" width="0.12736" height="0.00318" fill="url(#s107)"/><rect x="0.15606" y="0.29925" width="0.12951" height="0.00318" fill="url(#s108)"/><rect x="0.15575" y="0.30169" width="0.13166" height="0.00318" fill="url(#s109)"/><rect x="0.15545" y="0.30414" width="0.13381" height="0.00318" fill="url(#s110)"/><rect x="0.15515" y="0.30658" width="0.13595" height="0.00318" fill="url(#s111)"/><rect x="0.15484" y="0.30902" width="0.13810" height="0.00318" fill="url(#s112)"/><rect x="0.15454" y="0.31147" width="0.14025" height="0.00318" fill="url(#s113)"/><rect x="0.15423" y="0.31391" width="0.14240" height="0.00318" fill="url(#s114)"/><rect x="0.15393" y="0.31636" width="0.14454" height="0.00318" fill="url(#s115)"/><rect x="0.15362" y="0.31880" width="0.14669" height="0.00318" fill="url(#s116)"/><rect x="0.15332" y="0.32124" width="0.14884" height="0.00318" fill="url(#s117)"/><rect x="0.15301" y="0.32369" width="0.15099" height="0.00318" fill="url(#s118)"/><rect x="0.15271" y="0.32613" width="0.15313" height="0.00318" fill="url(#s119)"/><rect x="0.15240" y="0.32857" width="0.15528" height="0.00318" fill="url(#s120)"/><rect x="0.15210" y="0.33102" width="0.15743" height="0.00318" fill="url(#s121)"/><rect x="0.15180" y="0.33346" width="0.15958" height="0.00318" fill="url(#s122)"/><rect x="0.15149" y="0.33590" width="0.16172" height="0.00318" fill="url(#s123)"/><rect x="0.15119" y="0.33835" width="0.16387" height="0.00318" fill="url(#s124)"/><rect x="0.15088" y="0.34079" width="0.16602" height="0.00318" fill="url(#s125)"/><rect x="0.15058" y="0.34323" width="0.16817" height="0.00318" fill="url(#s126)"/><rect x="0.15027" y="0.34568" width="0.17031" height="0.00318" fill="url(#s127)"/><rect x="0.14997" y="0.34812" width="0.17246" height="0.00318" fill="url(#s128)"/><rect x="0.14966" y="0.35056" width="0.17461" height="0.00318" fill="url(#s129)"/><rect x="0.14936" y="0.35301" width="0.17675" height="0.00318" fill="url(#s130)"/><rect x="0.14905" y="0.35545" width="0.17890" height="0.00318" fill="url(#s131)"/><rect x="0.14875" y="0.35789" width="0.18105" height="0.00318" fill="url(#s132)"/><rect x="0.14844" y="0.36034" width="0.18320" height="0.00318" fill="url(#s133)"/><rect x="0.14814" y="0.36278" width="0.18534" height="0.00318" fill="url(#s134)"/><rect x="0.14784" y="0.36523" width="0.18749" height="0.00318" fill="url(#s135)"/><rect x="0.14753" y="0.36767" width="0.18964" height="0.00318" fill="url(#s136)"/><rect x="0.14723" y="0.37011" width="0.19179" height="0.00318" fill="url(#s137)"/><rect x="0.14692" y="0.37256" width="0.19393" height="0.00318" fill="url(#s138)"/><rect x="0.14662" y="0.37500" width="0.19608" height="0.00318" fill="url(#s139)"/><rect x="0.14631" y="0.37744" width="0.19823" height="0.00318" fill="url(#s140)"/><rect x="0.14601" y="0.37989" width="0.20038" height="0.00318" fill="url(#s141)"/><rect x="0.14570" y="0.38233" width="0.20252" height="0.00318" fill="url(#s142)"/><rect x="0.14540" y="0.38477" width="0.20467" height="0.00318" fill="url(#s143)"/><rect x="0.14509" y="0.38722" width="0.20682" height="0.00318" fill="url(#s144)"/><rect x="0.14479" y="0.38966" width="0.20897" height="0.00318" fill="url(#s145)"/><rect x="0.14448" y="0.39210" width="0.21111" height="0.00318" fill="url(#s146)"/><rect x="0.14418" y="0.39455" width="0.21326" height="0.00318" fill="url(#s147)"/><rect x="0.14388" y="0.39699" width="0.21541" height="0.00318" fill="url(#s148)"/><rect x="0.14357" y="0.39943" width="0.21756" height="0.00318" fill="url(#s149)"/><rect x="0.14327" y="0.40188" width="0.21970" height="0.00318" fill="url(#s150)"/><rect x="0.14296" y="0.40432" width="0.22185" height="0.00318" fill="url(#s151)"/><rect x="0.14266" y="0.40676" width="0.22400" height="0.00318" fill="url(#s152)"/><rect x="0.14235" y="0.40921" width="0.22615" height="0.00318" fill="url(#s153)"/><rect x="0.14205" y="0.41165" width="0.22829" height="0.00318" fill="url(#s154)"/><rect x="0.14174" y="0.41410" width="0.23044" height="0.00318" fill="url(#s155)"/><rect x="0.14144" y="0.41654" width="0.23259" height="0.00318" fill="url(#s156)"/><rect x="0.14113" y="0.41898" width="0.23473" height="0.00318" fill="url(#s157)"/><rect x="0.14083" y="0.42143" width="0.23688" height="0.00318" fill="url(#s158)"/><rect x="0.14052" y="0.42387" width="0.23903" height="0.00318" fill="url(#s159)"/><rect x="0.14022" y="0.42631" width="0.24118" height="0.00318" fill="url(#s160)"/><rect x="0.13992" y="0.42876" width="0.24332" height="0.00318" fill="url(#s161)"/><rect x="0.13961" y="0.43120" width="0.24547" height="0.00318" fill="url(#s162)"/><rect x="0.13931" y="0.43364" width="0.24762" height="0.00318" fill="url(#s163)"/><rect x="0.13900" y="0.43609" width="0.24977" height="0.00318" fill="url(#s164)"/><rect x="0.13870" y="0.43853" width="0.25191" height="0.00318" fill="url(#s165)"/><rect x="0.13839" y="0.44097" width="0.25406" height="0.00318" fill="url(#s166)"/><rect x="0.13809" y="0.44342" width="0.25621" height="0.00318" fill="url(#s167)"/><rect x="0.13778" y="0.44586" width="0.25836" height="0.00318" fill="url(#s168)"/><rect x="0.13748" y="0.44830" width="0.26050" height="0.00318" fill="url(#s169)"/><rect x="0.13717" y="0.45075" width="0.26265" height="0.00318" fill="url(#s170)"/><rect x="0.13687" y="0.45319" width="0.26480" height="0.00318" fill="url(#s171)"/><rect x="0.13656" y="0.45563" width="0.26695" height="0.00318" fill="url(#s172)"/><rect x="0.13626" y="0.45808" width="0.26909" height="0.00318" fill="url(#s173)"/><rect x="0.13596" y="0.46052" width="0.27124" height="0.00318" fill="url(#s174)"/><rect x="0.13565" y="0.46296" width="0.27339" height="0.00318" fill="url(#s175)"/><rect x="0.13535" y="0.46541" width="0.27554" height="0.00318" fill="url(#s176)"/><rect x="0.13504" y="0.46785" width="0.27768" height="0.00318" fill="url(#s177)"/><rect x="0.13474" y="0.47030" width="0.27983" height="0.00318" fill="url(#s178)"/><rect x="0.13443" y="0.47274" width="0.28198" height="0.00318" fill="url(#s179)"/><rect x="0.13413" y="0.47518" width="0.28413" height="0.00318" fill="url(#s180)"/><rect x="0.13382" y="0.47763" width="0.28627" height="0.00318" fill="url(#s181)"/><rect x="0.13352" y="0.48007" width="0.28842" height="0.00318" fill="url(#s182)"/><rect x="0.13321" y="0.48251" width="0.29057" height="0.00318" fill="url(#s183)"/><rect x="0.13291" y="0.48496" width="0.29272" height="0.00318" fill="url(#s184)"/><rect x="0.13260" y="0.48740" width="0.29486" height="0.00318" fill="url(#s185)"/><rect x="0.13230" y="0.48984" width="0.29701" height="0.00318" fill="url(#s186)"/><rect x="0.13200" y="0.49229" width="0.29916" height="0.00318" fill="url(#s187)"/><rect x="0.13169" y="0.49473" width="0.30130" height="0.00318" fill="url(#s188)"/><rect x="0.13139" y="0.49717" width="0.30345" height="0.00318" fill="url(#s189)"/><rect x="0.13108" y="0.49962" width="0.30560" height="0.00318" fill="url(#s190)"/><rect x="0.13078" y="0.50206" width="0.30775" height="0.00318" fill="url(#s191)"/><rect x="0.13047" y="0.50450" width="0.30989" height="0.00318" fill="url(#s192)"/><rect x="0.13017" y="0.50695" width="0.31204" height="0.00318" fill="url(#s193)"/><rect x="0.12986" y="0.50939" width="0.31419" height="0.00318" fill="url(#s194)"/><rect x="0.12956" y="0.51183" width="0.31634" height="0.00318" fill="url(#s195)"/><rect x="0.12925" y="0.51428" width="0.31848" height="0.00318" fill="url(#s196)"/><rect x="0.12895" y="0.51672" width="0.32063" height="0.00318" fill="url(#s197)"/><rect x="0.12864" y="0.51917" width="0.32278" height="0.00318" fill="url(#s198)"/><rect x="0.12834" y="0.52161" width="0.32308" height="0.00318" fill="url(#s199)"/><rect x="0.12804" y="0.52405" width="0.31148" height="0.00318" fill="url(#s200)"/><rect x="0.12773" y="0.52650" width="0.29170" height="0.00318" fill="url(#s201)"/><rect x="0.12743" y="0.52894" width="0.27191" height="0.00318" fill="url(#s202)"/><rect x="0.12712" y="0.53138" width="0.25212" height="0.00318" fill="url(#s203)"/><rect x="0.12682" y="0.53383" width="0.23234" height="0.00318" fill="url(#s204)"/><rect x="0.12651" y="0.53627" width="0.21255" height="0.00318" fill="url(#s205)"/><rect x="0.12621" y="0.53871" width="0.19277" height="0.00318" fill="url(#s206)"/><rect x="0.12590" y="0.54116" width="0.17298" height="0.00318" fill="url(#s207)"/><rect x="0.12560" y="0.54360" width="0.15319" height="0.00318" fill="url(#s208)"/><rect x="0.12529" y="0.54604" width="0.13341" height="0.00318" fill="url(#s209)"/><rect x="0.12499" y="0.54849" width="0.11362" height="0.00318" fill="url(#s210)"/><rect x="0.12468" y="0.55093" width="0.09383" height="0.00318" fill="url(#s211)"/><rect x="0.12438" y="0.55337" width="0.07405" height="0.00318" fill="url(#s212)"/><rect x="0.12408" y="0.55582" width="0.05426" height="0.00318" fill="url(#s213)"/><rect x="0.12377" y="0.55826" width="0.03447" height="0.00318" fill="url(#s214)"/><rect x="0.12359" y="0.56070" width="0.01456" height="0.00318" fill="url(#s215)"/><rect x="0.12359" y="0.56315" width="0.00364" height="0.00318" fill="url(#s216)"/></g></g></g></g><rect x="1146.3" y="141.9" width="14" height="14" fill="#fff" fill-opacity="0.08" stroke="#f8f8f8" stroke-opacity="0.95" stroke-width="1.8"/><rect x="1158.2" y="153.6" width="14" height="14" fill="#fff" fill-opacity="0.08" stroke="#f8f8f8" stroke-opacity="0.95" stroke-width="1.8"/><rect x="1171.3" y="166.4" width="14" height="14" fill="#fff" fill-opacity="0.08" stroke="#f8f8f8" stroke-opacity="0.95" stroke-width="1.8"/><rect x="1185.2" y="180.6" width="14" height="14" fill="#fff" fill-opacity="0.08" stroke="#f8f8f8" stroke-opacity="0.95" stroke-width="1.8"/><rect x="1203" y="198" width="14" height="14" fill="#fff" fill-opacity="0.08" stroke="#f8f8f8" stroke-opacity="0.95" stroke-width="1.8"/><rect x="1271.9" y="211.1" width="14" height="14" fill="#fff" fill-opacity="0.08" stroke="#f8f8f8" stroke-opacity="0.95" stroke-width="1.8"/><rect x="1325.8" y="202.1" width="14" height="14" fill="#fff" fill-opacity="0.08" stroke="#f8f8f8" stroke-opacity="0.95" stroke-width="1.8"/><rect x="1374.1" y="194.8" width="14" height="14" fill="#fff" fill-opacity="0.08" stroke="#f8f8f8" stroke-opacity="0.95" stroke-width="1.8"/><rect x="1428.6" y="184.7" width="14" height="14" fill="#fff" fill-opacity="0.08" stroke="#f8f8f8" stroke-opacity="0.95" stroke-width="1.8"/><rect x="1493.2" y="174.6" width="14" height="14" fill="#fff" fill-opacity="0.08" stroke="#f8f8f8" stroke-opacity="0.95" stroke-width="1.8"/><rect x="1220.8" y="248.6" width="14" height="14" fill="#fff" fill-opacity="0.08" stroke="#f8f8f8" stroke-opacity="0.95" stroke-width="1.8"/><rect x="1218.5" y="286.4" width="14" height="14" fill="#fff" fill-opacity="0.08" stroke="#f8f8f8" stroke-opacity="0.95" stroke-width="1.8"/><rect x="1214" y="331.3" width="14" height="14" fill="#fff" fill-opacity="0.08" stroke="#f8f8f8" stroke-opacity="0.95" stroke-width="1.8"/><rect x="1207.8" y="388.1" width="14" height="14" fill="#fff" fill-opacity="0.08" stroke="#f8f8f8" stroke-opacity="0.95" stroke-width="1.8"/><rect x="1200" y="474.6" width="14" height="14" fill="#fff" fill-opacity="0.08" stroke="#f8f8f8" stroke-opacity="0.95" stroke-width="1.8"/><rect x="1240.4" y="236" width="14" height="14" fill="#fff" fill-opacity="0.08" stroke="#f8f8f8" stroke-opacity="0.95" stroke-width="1.8"/><rect x="1259.7" y="255" width="14" height="14" fill="#fff" fill-opacity="0.08" stroke="#f8f8f8" stroke-opacity="0.95" stroke-width="1.8"/><rect x="1279.5" y="274.8" width="14" height="14" fill="#fff" fill-opacity="0.08" stroke="#f8f8f8" stroke-opacity="0.95" stroke-width="1.8"/><rect x="1305.1" y="301.2" width="14" height="14" fill="#fff" fill-opacity="0.08" stroke="#f8f8f8" stroke-opacity="0.95" stroke-width="1.8"/><rect x="1338.3" y="332.6" width="14" height="14" fill="#fff" fill-opacity="0.08" stroke="#f8f8f8" stroke-opacity="0.95" stroke-width="1.8"/><rect x="1230.5" y="149" width="14" height="14" fill="#fff" fill-opacity="0.08" stroke="#f8f8f8" stroke-opacity="0.95" stroke-width="1.8"/><rect x="1229.2" y="162.5" width="14" height="14" fill="#fff" fill-opacity="0.08" stroke="#f8f8f8" stroke-opacity="0.95" stroke-width="1.8"/><rect x="1228.5" y="174.5" width="14" height="14" fill="#fff" fill-opacity="0.08" stroke="#f8f8f8" stroke-opacity="0.95" stroke-width="1.8"/><rect x="1227.2" y="187.5" width="14" height="14" fill="#fff" fill-opacity="0.08" stroke="#f8f8f8" stroke-opacity="0.95" stroke-width="1.8"/><rect x="1226" y="203" width="14" height="14" fill="#fff" fill-opacity="0.08" stroke="#f8f8f8" stroke-opacity="0.95" stroke-width="1.8"/><rect x="1161" y="230" width="14" height="14" fill="#fff" fill-opacity="0.08" stroke="#f8f8f8" stroke-opacity="0.95" stroke-width="1.8"/><rect x="1173.5" y="228.6" width="14" height="14" fill="#fff" fill-opacity="0.08" stroke="#f8f8f8" stroke-opacity="0.95" stroke-width="1.8"/><rect x="1186" y="226.2" width="14" height="14" fill="#fff" fill-opacity="0.08" stroke="#f8f8f8" stroke-opacity="0.95" stroke-width="1.8"/><rect x="1199.5" y="224" width="14" height="14" fill="#fff" fill-opacity="0.08" stroke="#f8f8f8" stroke-opacity="0.95" stroke-width="1.8"/><rect x="1211" y="221.5" width="14" height="14" fill="#fff" fill-opacity="0.08" stroke="#f8f8f8" stroke-opacity="0.95" stroke-width="1.8"/><circle cx="1152.5" cy="147.9" r="4.7" fill="#1fb01f" stroke="#000" stroke-width="1.1"/><circle cx="1164.9" cy="159.7" r="4.7" fill="#48ae48" stroke="#000" stroke-width="1.1"/><circle cx="1178.9" cy="173.4" r="4.7" fill="#6cac6c" stroke="#000" stroke-width="1.1"/><circle cx="1192.4" cy="187.2" r="4.7" fill="#87aa87" stroke="#000" stroke-width="1.1"/><circle cx="1208.8" cy="203.6" r="4.7" fill="#9ba99b" stroke="#000" stroke-width="1.1"/><circle cx="1278.9" cy="217.4" r="4.7" fill="#a98e8a" stroke="#000" stroke-width="1.1"/><circle cx="1333.5" cy="208" r="4.7" fill="#ae7471" stroke="#000" stroke-width="1.1"/><circle cx="1382.8" cy="199.8" r="4.7" fill="#b45a58" stroke="#000" stroke-width="1.1"/><circle cx="1444.6" cy="189.8" r="4.7" fill="#ba403f" stroke="#000" stroke-width="1.1"/><circle cx="1508.6" cy="179.6" r="4.7" fill="#bf2626" stroke="#000" stroke-width="1.1"/><circle cx="1226.5" cy="255" r="4.7" fill="#8d91a7" stroke="#000" stroke-width="1.1"/><circle cx="1225.2" cy="292.6" r="4.7" fill="#7679ab" stroke="#000" stroke-width="1.1"/><circle cx="1218.3" cy="338.4" r="4.7" fill="#6062af" stroke="#000" stroke-width="1.1"/><circle cx="1211.5" cy="402.2" r="4.7" fill="#494ab4" stroke="#000" stroke-width="1.1"/><circle cx="1204.2" cy="483.6" r="4.7" fill="#3333b8" stroke="#000" stroke-width="1.1"/><circle cx="1247.2" cy="242.2" r="4.7" fill="#a48ea4" stroke="#000" stroke-width="1.1"/><circle cx="1265.6" cy="260.8" r="4.7" fill="#a574a5" stroke="#000" stroke-width="1.1"/><circle cx="1286.2" cy="280.2" r="4.7" fill="#a65aa6" stroke="#000" stroke-width="1.1"/><circle cx="1312.1" cy="306.9" r="4.7" fill="#a740a7" stroke="#000" stroke-width="1.1"/><circle cx="1347.6" cy="339.7" r="4.7" fill="#a826a8" stroke="#000" stroke-width="1.1"/><circle cx="1237.5" cy="155.4" r="4.7" fill="#bfb81f" stroke="#000" stroke-width="1.1"/><circle cx="1236.1" cy="168.4" r="4.7" fill="#b6b348" stroke="#000" stroke-width="1.1"/><circle cx="1234.7" cy="179.8" r="4.7" fill="#afaf6c" stroke="#000" stroke-width="1.1"/><circle cx="1233.3" cy="193" r="4.7" fill="#a9ac87" stroke="#000" stroke-width="1.1"/><circle cx="1232" cy="208" r="4.7" fill="#a5a99b" stroke="#000" stroke-width="1.1"/><circle cx="1167.1" cy="234.6" r="4.7" fill="#1fa8b8" stroke="#000" stroke-width="1.1"/><circle cx="1179.1" cy="233.6" r="4.7" fill="#48a8b1" stroke="#000" stroke-width="1.1"/><circle cx="1191" cy="230.6" r="4.7" fill="#6ca8ac" stroke="#000" stroke-width="1.1"/><circle cx="1204.8" cy="229.1" r="4.7" fill="#87a8a7" stroke="#000" stroke-width="1.1"/><circle cx="1216.9" cy="226.6" r="4.7" fill="#9ba8a5" stroke="#000" stroke-width="1.1"/><rect x="1223.6" y="219" width="14" height="14" fill="none" stroke="#000" stroke-width="1.8"/><circle cx="1230.5" cy="226" r="4.7" fill="#fff" stroke="#000" stroke-width="1.1"/><rect x="1020.8" y="119.8" width="639.7" height="491.4" fill="none" stroke="#9a9a9a" stroke-width="1.6"/><line x1="1014.8" y1="611.2" x2="1020.8" y2="611.2" stroke="#c8c8c8" stroke-width="1.4"/><text x="1014.5" y="616.2" font-size="14" fill="#d4d4d4" text-anchor="end">0</text><line x1="1014.8" y1="570.28" x2="1020.8" y2="570.28" stroke="#c8c8c8" stroke-width="1.4"/><text x="1014.5" y="575.28" font-size="14" fill="#d4d4d4" text-anchor="end">0,05</text><line x1="1014.8" y1="529.35" x2="1020.8" y2="529.35" stroke="#c8c8c8" stroke-width="1.4"/><text x="1014.5" y="534.35" font-size="14" fill="#d4d4d4" text-anchor="end">0,1</text><line x1="1014.8" y1="488.43" x2="1020.8" y2="488.43" stroke="#c8c8c8" stroke-width="1.4"/><text x="1014.5" y="493.43" font-size="14" fill="#d4d4d4" text-anchor="end">0,15</text><line x1="1014.8" y1="447.5" x2="1020.8" y2="447.5" stroke="#c8c8c8" stroke-width="1.4"/><text x="1014.5" y="452.5" font-size="14" fill="#d4d4d4" text-anchor="end">0,2</text><line x1="1014.8" y1="406.58" x2="1020.8" y2="406.58" stroke="#c8c8c8" stroke-width="1.4"/><text x="1014.5" y="411.58" font-size="14" fill="#d4d4d4" text-anchor="end">0,25</text><line x1="1014.8" y1="365.65" x2="1020.8" y2="365.65" stroke="#c8c8c8" stroke-width="1.4"/><text x="1014.5" y="370.65" font-size="14" fill="#d4d4d4" text-anchor="end">0,3</text><line x1="1014.8" y1="324.73" x2="1020.8" y2="324.73" stroke="#c8c8c8" stroke-width="1.4"/><text x="1014.5" y="329.73" font-size="14" fill="#d4d4d4" text-anchor="end">0,35</text><line x1="1014.8" y1="283.8" x2="1020.8" y2="283.8" stroke="#c8c8c8" stroke-width="1.4"/><text x="1014.5" y="288.8" font-size="14" fill="#d4d4d4" text-anchor="end">0,4</text><line x1="1014.8" y1="242.88" x2="1020.8" y2="242.88" stroke="#c8c8c8" stroke-width="1.4"/><text x="1014.5" y="247.88" font-size="14" fill="#d4d4d4" text-anchor="end">0,45</text><line x1="1014.8" y1="201.95" x2="1020.8" y2="201.95" stroke="#c8c8c8" stroke-width="1.4"/><text x="1014.5" y="206.95" font-size="14" fill="#d4d4d4" text-anchor="end">0,5</text><line x1="1014.8" y1="161.03" x2="1020.8" y2="161.03" stroke="#c8c8c8" stroke-width="1.4"/><text x="1014.5" y="166.03" font-size="14" fill="#d4d4d4" text-anchor="end">0,55</text><line x1="1020.8" y1="611.2" x2="1020.8" y2="617.2" stroke="#c8c8c8" stroke-width="1.4"/><text x="1020.8" y="633.3" font-size="14" fill="#d4d4d4" text-anchor="middle">0</text><line x1="1074.1" y1="611.2" x2="1074.1" y2="617.2" stroke="#c8c8c8" stroke-width="1.4"/><text x="1074.1" y="633.3" font-size="14" fill="#d4d4d4" text-anchor="middle">0,05</text><line x1="1127.4" y1="611.2" x2="1127.4" y2="617.2" stroke="#c8c8c8" stroke-width="1.4"/><text x="1127.4" y="633.3" font-size="14" fill="#d4d4d4" text-anchor="middle">0,1</text><line x1="1180.7" y1="611.2" x2="1180.7" y2="617.2" stroke="#c8c8c8" stroke-width="1.4"/><text x="1180.7" y="633.3" font-size="14" fill="#d4d4d4" text-anchor="middle">0,15</text><line x1="1234" y1="611.2" x2="1234" y2="617.2" stroke="#c8c8c8" stroke-width="1.4"/><text x="1234" y="633.3" font-size="14" fill="#d4d4d4" text-anchor="middle">0,2</text><line x1="1287.3" y1="611.2" x2="1287.3" y2="617.2" stroke="#c8c8c8" stroke-width="1.4"/><text x="1287.3" y="633.3" font-size="14" fill="#d4d4d4" text-anchor="middle">0,25</text><line x1="1340.6" y1="611.2" x2="1340.6" y2="617.2" stroke="#c8c8c8" stroke-width="1.4"/><text x="1340.6" y="633.3" font-size="14" fill="#d4d4d4" text-anchor="middle">0,3</text><line x1="1393.9" y1="611.2" x2="1393.9" y2="617.2" stroke="#c8c8c8" stroke-width="1.4"/><text x="1393.9" y="633.3" font-size="14" fill="#d4d4d4" text-anchor="middle">0,35</text><line x1="1447.2" y1="611.2" x2="1447.2" y2="617.2" stroke="#c8c8c8" stroke-width="1.4"/><text x="1447.2" y="633.3" font-size="14" fill="#d4d4d4" text-anchor="middle">0,4</text><line x1="1500.5" y1="611.2" x2="1500.5" y2="617.2" stroke="#c8c8c8" stroke-width="1.4"/><text x="1500.5" y="633.3" font-size="14" fill="#d4d4d4" text-anchor="middle">0,45</text><line x1="1553.8" y1="611.2" x2="1553.8" y2="617.2" stroke="#c8c8c8" stroke-width="1.4"/><text x="1553.8" y="633.3" font-size="14" fill="#d4d4d4" text-anchor="middle">0,5</text><line x1="1607.1" y1="611.2" x2="1607.1" y2="617.2" stroke="#c8c8c8" stroke-width="1.4"/><text x="1607.1" y="633.3" font-size="14" fill="#d4d4d4" text-anchor="middle">0,55</text><g clip-path="url(#cIns)"><rect x="1442.2" y="459.3" width="212.1" height="144.5" fill="url(#h217)"/><path d="M1442.2,475.4 L1654.3,587.7 V603.8 H1442.2 Z" fill="url(#i218)"/><path d="M1442.2,459.3 H1654.3 V587.7 L1442.2,475.4 Z" fill="url(#i219)"/></g><rect x="1442.2" y="459.3" width="212.1" height="144.5" fill="none" stroke="#a8a8a8" stroke-width="2"/><rect x="1540.6" y="523.3" width="14" height="14" fill="#fff" fill-opacity="0.1" stroke="#f4f4f4" stroke-width="1.6"/><circle cx="1551.3" cy="522.7" r="4.6" fill="#a8a400" stroke="#000" stroke-width="1.2"/><rect x="2.5" y="929.5" width="1662" height="76.5" fill="url(#v220)"/><rect x="2.5" y="929.5" width="1012.2" height="76.5" fill="#2a2a2a"/><path d="M3.1,1006 V934.5 Q3.1,929.5 8.1,929.5 H54.1 Q59.1,929.5 59.1,934.5 V1006 Z" fill="url(#v221)"/><circle cx="31.4" cy="941" r="9.5" fill="url(#v222)"/><path d="M25.5,944 L31.4,937.5 L37.3,944 Z" fill="#262626"/><rect x="9.9" y="962.5" width="43.2" height="36.6" rx="4.5" fill="#ffff00" stroke="#5a5a00" stroke-width="1"/><path d="M67,1006 V934.5 Q67,929.5 72,929.5 H249.5 Q254.5,929.5 254.5,934.5 V1006 Z" fill="url(#v221)"/><rect x="73.6" y="936.1" width="174.3" height="44.6" rx="5" fill="#c1c3a4" stroke="#8a8a6a" stroke-width="1" stroke-opacity="0.6"/><text x="160.75" y="999.8" font-size="13" fill="#2a2a2a" text-anchor="middle" font-weight="bold" textLength="25.5" lengthAdjust="spacingAndGlyphs">20%</text><path d="M256.8,1006 V934.5 Q256.8,929.5 261.8,929.5 H439.5 Q444.5,929.5 444.5,934.5 V1006 Z" fill="url(#v221)"/><rect x="263.4" y="936.1" width="174.5" height="44.6" rx="5" fill="#c2c087" stroke="#8a8a6a" stroke-width="1" stroke-opacity="0.6"/><text x="350.65" y="999.8" font-size="13" fill="#2a2a2a" text-anchor="middle" font-weight="bold" textLength="25.5" lengthAdjust="spacingAndGlyphs">40%</text><path d="M446.8,1006 V934.5 Q446.8,929.5 451.8,929.5 H629.2 Q634.2,929.5 634.2,934.5 V1006 Z" fill="url(#v221)"/><rect x="453.4" y="936.1" width="174.2" height="44.6" rx="5" fill="#c3c16e" stroke="#8a8a6a" stroke-width="1" stroke-opacity="0.6"/><text x="540.5" y="999.8" font-size="13" fill="#2a2a2a" text-anchor="middle" font-weight="bold" textLength="25.5" lengthAdjust="spacingAndGlyphs">60%</text><path d="M636.6,1006 V934.5 Q636.6,929.5 641.6,929.5 H819.1 Q824.1,929.5 824.1,934.5 V1006 Z" fill="url(#v221)"/><rect x="643.2" y="936.1" width="174.3" height="44.6" rx="5" fill="#c2c04d" stroke="#8a8a6a" stroke-width="1" stroke-opacity="0.6"/><text x="730.35" y="999.8" font-size="13" fill="#2a2a2a" text-anchor="middle" font-weight="bold" textLength="25.5" lengthAdjust="spacingAndGlyphs">80%</text><path d="M827.2,1006 V934.5 Q827.2,929.5 832.2,929.5 H1009.7 Q1014.7,929.5 1014.7,934.5 V1006 Z" fill="url(#v223)"/><rect x="833.5" y="935.6" width="175" height="45.1" rx="5" fill="#c3c000"/><text x="921" y="1000.1" font-size="13" fill="#ffffff" text-anchor="middle" font-weight="bold" textLength="33" lengthAdjust="spacingAndGlyphs">100%</text><path d="M1268.6,1006 V934.5 Q1268.6,929.5 1273.6,929.5 H1322.6 Q1327.6,929.5 1327.6,934.5 V1006 Z" fill="url(#v224)"/><line x1="1268.6" y1="952" x2="1327.6" y2="952" stroke="#4a4a4a" stroke-width="1.4"/><rect x="1268.6" y="952.7" width="59" height="53.3" fill="url(#v225)"/><circle cx="1298.5" cy="940.7" r="9.5" fill="url(#v226)"/><path d="M1292.6,943.5 L1298.5,937 L1304.4,943.5 Z" fill="#262626"/><rect x="1279.5" y="961" width="37.5" height="37" rx="5" fill="url(#v227)" stroke="#1e1e1e" stroke-width="2.4"/><rect x="1290" y="971" width="17.5" height="17" fill="#000"/><rect x="1328.4" y="929.5" width="342.6" height="76.5" fill="#2a2a2a"/><rect x="1329.7" y="929.3" width="56.9" height="37.2" fill="url(#v228)"/><circle cx="1358.15" cy="948" r="12" fill="url(#v229)"/><rect x="1388" y="929.3" width="54.9" height="37.2" fill="url(#v228)"/><circle cx="1415.45" cy="948" r="12" fill="url(#v230)"/><rect x="1444.3" y="929.3" width="54.8" height="37.2" fill="url(#v228)"/><circle cx="1471.7" cy="948" r="12" fill="url(#v231)"/><rect x="1500.5" y="929.3" width="54.8" height="37.2" fill="url(#v228)"/><circle cx="1527.9" cy="948" r="12" fill="url(#v232)"/><rect x="1556.7" y="929.3" width="54.8" height="37.2" fill="url(#v228)"/><circle cx="1584.1" cy="948" r="12" fill="url(#v233)"/><rect x="1612.9" y="929.3" width="57.4" height="37.2" fill="url(#v228)"/><circle cx="1641.6" cy="948" r="12" fill="url(#v234)"/><rect x="1329.7" y="968.4" width="169.4" height="38" fill="url(#v228)"/><rect x="1500.5" y="968.4" width="169.8" height="38" fill="url(#v228)"/><rect x="1352.8" y="943" width="10.5" height="10.5" fill="#2e2e2e"/><path d="M1412.3,941.5 L1422.5,948.3 L1412.3,955 Z" fill="#2e2e2e"/><path d="M1468,942.5 h-2.6 v12.5 h2.6 M1476.6,942.5 h2.6 v12.5 h-2.6" fill="none" stroke="#2e2e2e" stroke-width="2.6"/><circle cx="1470.4" cy="948.6" r="1.3" fill="#2e2e2e"/><circle cx="1474.4" cy="948.6" r="1.3" fill="#2e2e2e"/><path d="M1528,948 c-2.4,-3.4 -7.6,-3.4 -7.6,0 c0,3.4 5.2,3.4 7.6,0 c2.4,-3.4 7.6,-3.4 7.6,0 c0,3.4 -5.2,3.4 -7.6,0 Z" fill="none" stroke="#2e2e2e" stroke-width="2.3"/><path d="M1578.6,949.5 A6,6 0 0 1 1588.6,944.2 M1590.2,947.5 A6,6 0 0 1 1580.2,952.8" fill="none" stroke="#2e2e2e" stroke-width="2.5"/><path d="M1586.2,942.2 L1591.6,940.6 L1591,946.6 Z M1582.6,954.8 L1577.2,956.4 L1577.8,950.4 Z" fill="#2e2e2e"/><circle cx="1367.9" cy="986.4" r="12" fill="url(#v235)"/><path d="M1366,980.5 l-5,5.5 l5,5.5 M1371,980.5 l-5,5.5 l5,5.5" fill="none" stroke="#2e2e2e" stroke-width="2.3"/><circle cx="1635" cy="986.4" r="12" fill="url(#v236)"/><path d="M1632,980.5 l5,5.5 l-5,5.5 M1637,980.5 l5,5.5 l-5,5.5" fill="none" stroke="#2e2e2e" stroke-width="2.3"/><text x="1402.5" y="996.6" font-size="26" fill="#353535" textLength="61.5" lengthAdjust="spacingAndGlyphs" stroke="#353535" stroke-width="0.9">Back</text><text x="1536.2" y="996.6" font-size="26" fill="#353535" textLength="63" lengthAdjust="spacingAndGlyphs" stroke="#353535" stroke-width="0.9">Next</text><rect x="1664" y="0" width="7" height="1006" fill="url(#h237)"/></svg></body></html>
